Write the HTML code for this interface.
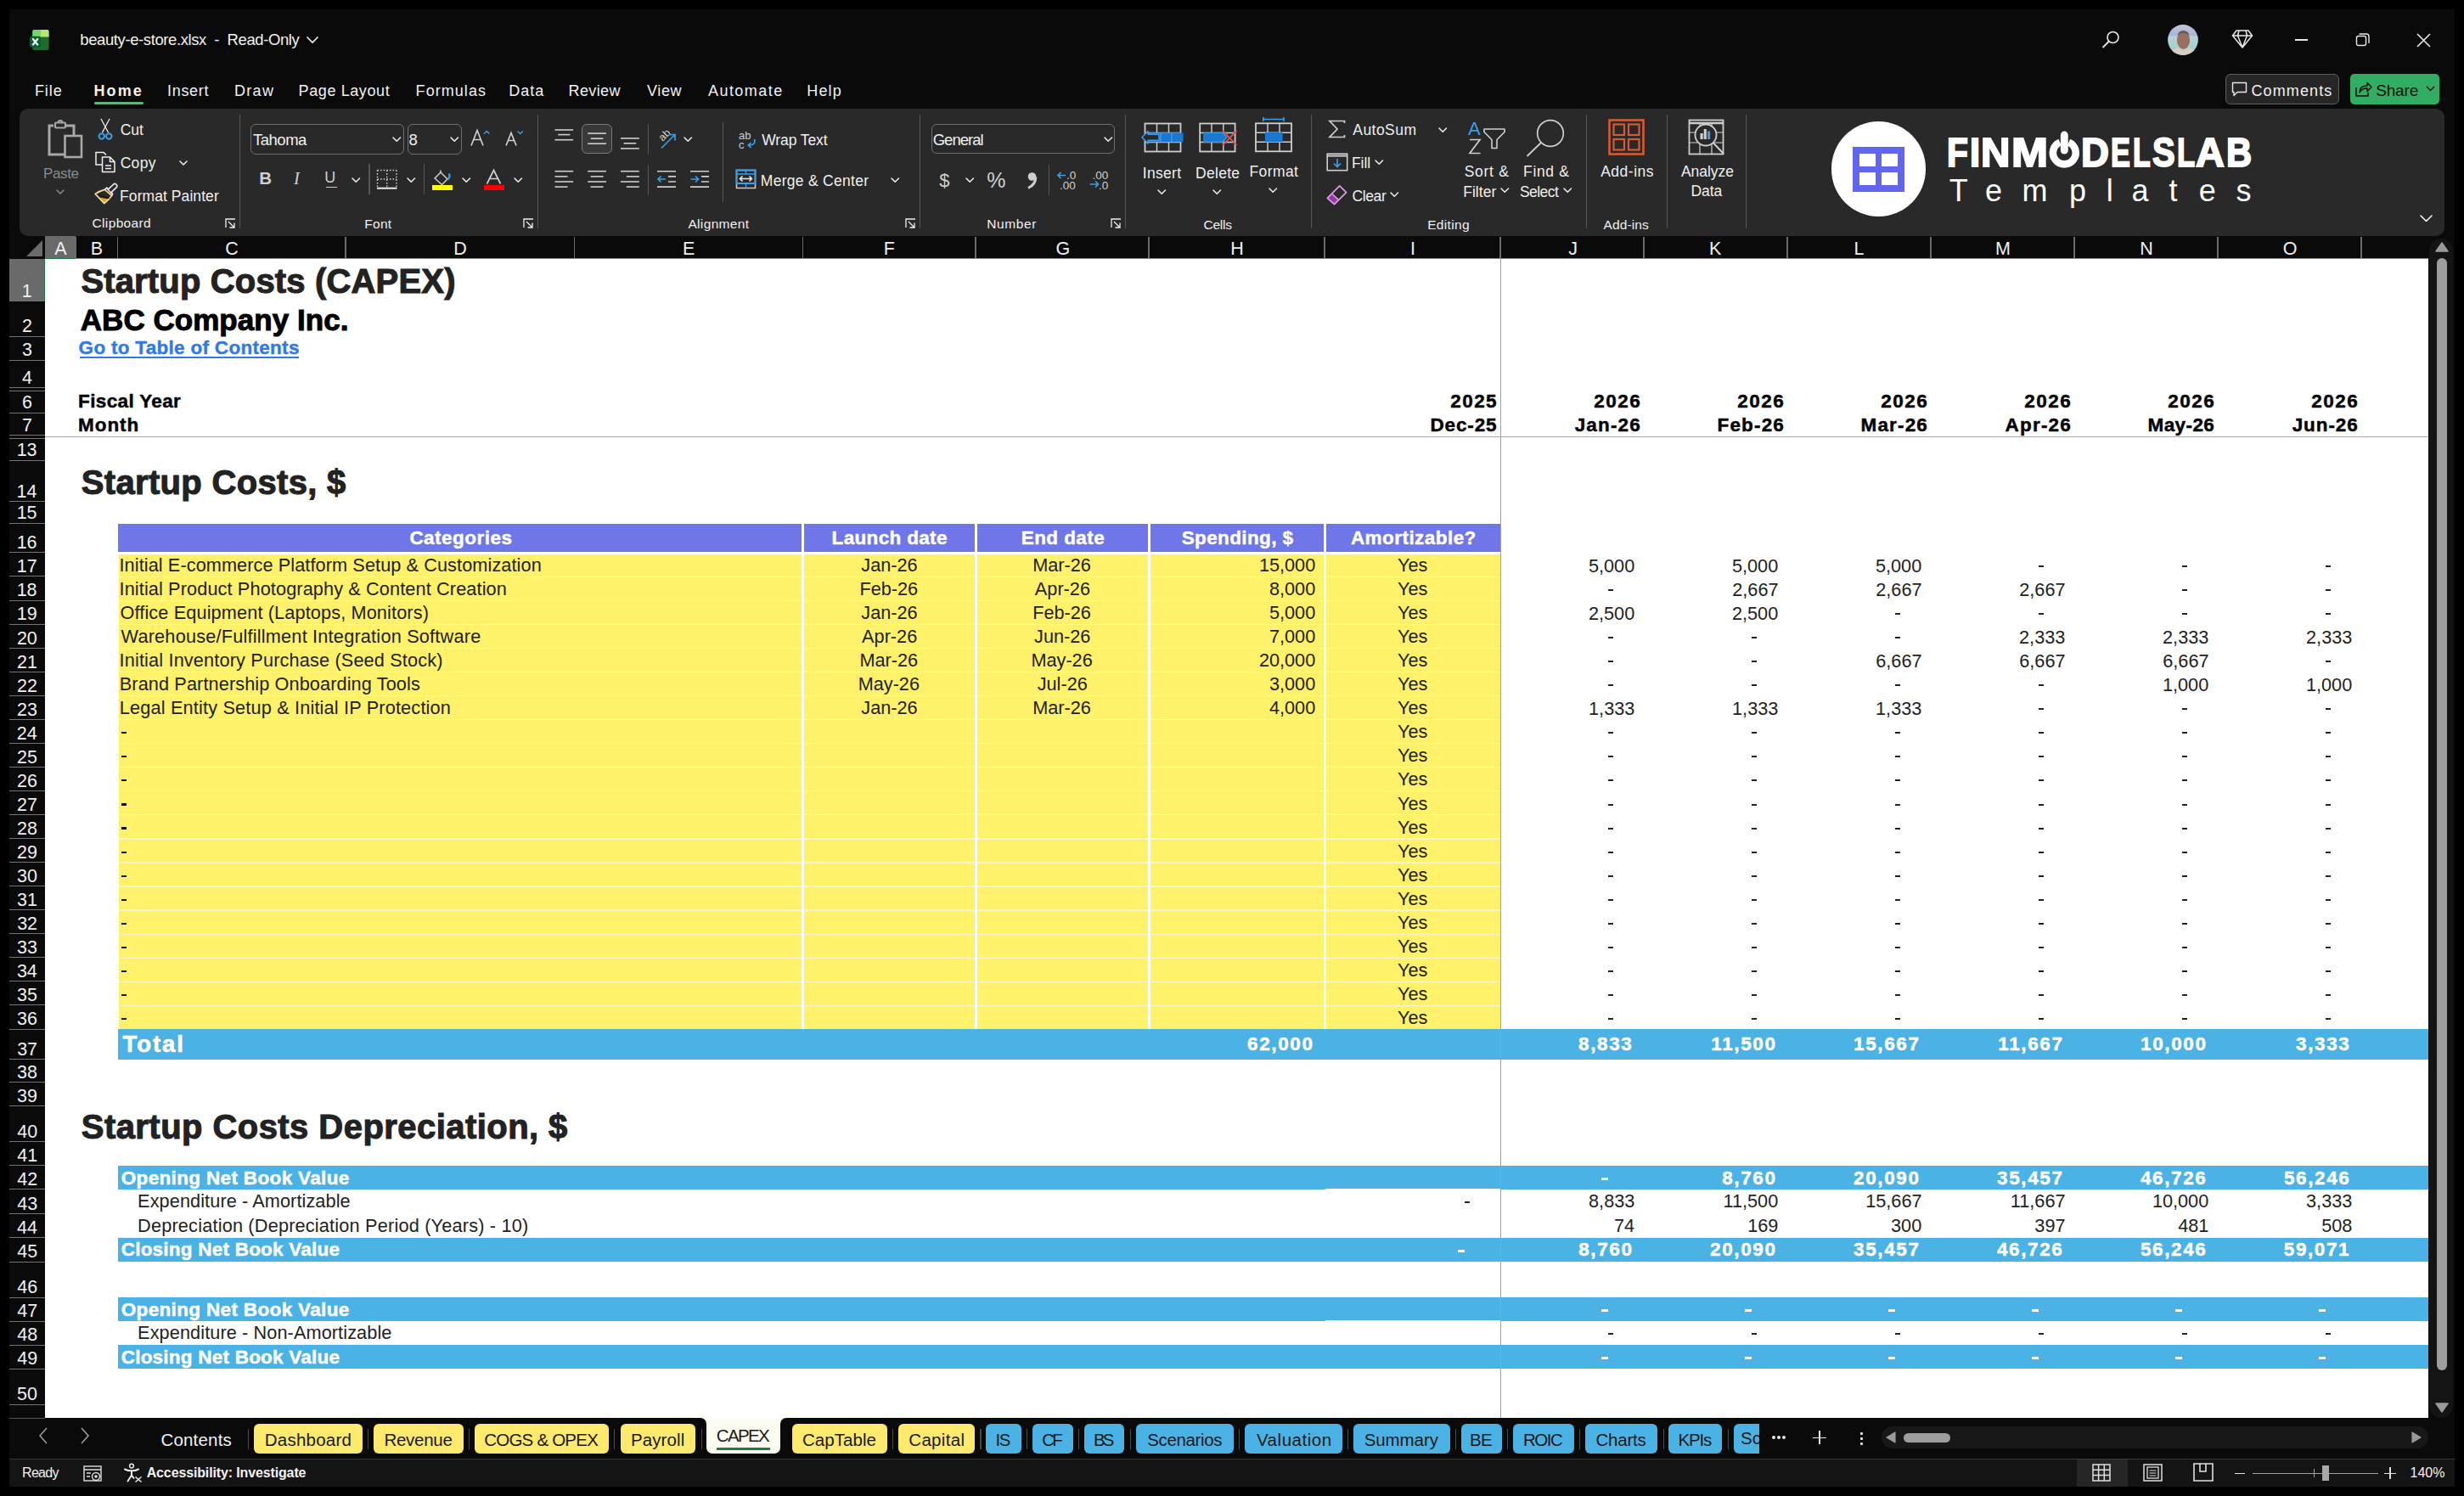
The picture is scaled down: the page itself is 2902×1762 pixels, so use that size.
<!DOCTYPE html>
<html><head><meta charset="utf-8"><style>
html,body{margin:0;padding:0;background:#000;}
body{width:2902px;height:1762px;position:relative;overflow:hidden;font-family:"Liberation Sans",sans-serif;}
</style></head><body>
<div style="position:absolute;left:11px;top:11px;width:2880px;height:1740px;background:#0a0a0a;"></div>
<svg style="position:absolute;left:34px;top:34px;" width="25" height="26" viewBox="0 0 25 26"><rect x="4.2" y="0.9" width="19.4" height="24" rx="2" fill="#1f6b2b"/><path d="M6.2 0.9 H13.3 V9.4 H4.2 V2.9 a2 2 0 0 1 2-2 Z" fill="#6fd56c"/><path d="M13.3 0.9 H21.6 a2 2 0 0 1 2 2 V9.4 H13.3 Z" fill="#b5e67a"/><rect x="1" y="8.7" width="12.7" height="13" rx="2" fill="#0d5a34"/><path d="M4.3 11.3 L10.8 19.2 M10.8 11.3 L4.3 19.2" stroke="#f2fff4" stroke-width="2.2"/></svg>
<div style="position:absolute;left:94.30px;top:38.48px;font-family:'Liberation Sans', sans-serif;font-size:18.5px;line-height:1;font-weight:normal;color:#f2f2f2;white-space:pre;letter-spacing:-0.406px;">beauty-e-store.xlsx  -  Read-Only</div>
<svg style="position:absolute;left:360px;top:42px;" width="16" height="10" viewBox="0 0 16 10"><path d="M1.5 1.5 L8 8 L14.5 1.5" stroke="#f0f0f0" stroke-width="1.6" fill="none"/></svg>
<svg style="position:absolute;left:2474px;top:35px;" width="24" height="24" viewBox="0 0 24 24"><circle cx="14.5" cy="9" r="6.5" stroke="#e8e8e8" stroke-width="1.6" fill="none"/><path d="M10 13.5 L2.5 21" stroke="#e8e8e8" stroke-width="1.8"/></svg>
<svg style="position:absolute;left:2553px;top:29px;" width="36" height="36" viewBox="0 0 36 36"><defs><clipPath id="av"><circle cx="18" cy="18" r="17.9"/></clipPath><linearGradient id="avg" x1="0" y1="0" x2="0" y2="1"><stop offset="0" stop-color="#c4c8e0"/><stop offset="0.33" stop-color="#aab4d4"/><stop offset="0.4" stop-color="#b4d4d8"/><stop offset="0.8" stop-color="#a6d0cc"/><stop offset="1" stop-color="#c8d0c8"/></linearGradient></defs><g clip-path="url(#av)"><rect width="36" height="36" fill="url(#avg)"/><ellipse cx="18.5" cy="18.5" rx="7.6" ry="10.4" fill="#977062"/><path d="M11.5 14 Q12 7 18.5 7 Q25 7 25.5 14 Q24 10 18.5 10 Q13 10 11.5 14 Z" fill="#6a5a58"/><path d="M1 36 Q5 29 13 27.5 L18.5 31 L24 27.5 Q32 29 36 36 Z" fill="#d9cdc2"/></g></svg>
<svg style="position:absolute;left:2628px;top:34px;" width="26" height="24" viewBox="0 0 26 24"><path d="M6 2 H20 L24.5 8 L13 22 L1.5 8 Z M1.5 8 H24.5 M9 2 L7.5 8 L13 22 L18.5 8 L17 2" stroke="#e8e8e8" stroke-width="1.5" fill="none" stroke-linejoin="round"/></svg>
<div style="position:absolute;left:2703px;top:46px;width:15px;height:1.5px;background:#e8e8e8;"></div>
<svg style="position:absolute;left:2774px;top:38px;" width="18" height="18" viewBox="0 0 18 18"><rect x="1.5" y="4.5" width="11" height="11" rx="2" stroke="#e8e8e8" stroke-width="1.4" fill="none"/><path d="M4.5 2 H13 a3 3 0 0 1 3 3 V13" stroke="#e8e8e8" stroke-width="1.4" fill="none"/></svg>
<svg style="position:absolute;left:2846px;top:39px;" width="17" height="17" viewBox="0 0 17 17"><path d="M1 1 L16 16 M16 1 L1 16" stroke="#e8e8e8" stroke-width="1.6"/></svg>
<div style="position:absolute;left:2621px;top:87px;width:132px;height:34px;border:1.3px solid #5e5e5e;border-radius:6px;background:#262626"></div>
<svg style="position:absolute;left:2628px;top:96px;" width="19" height="19" viewBox="0 0 19 19"><path d="M1.5 1.5 H17.5 V12.5 H7 L3 16.5 V12.5 H1.5 Z" stroke="#e8e8e8" stroke-width="1.4" fill="none" stroke-linejoin="round"/></svg>
<div style="position:absolute;left:2651.40px;top:97.50px;font-family:'Liberation Sans', sans-serif;font-size:18.0px;line-height:1;font-weight:normal;color:#f2f2f2;white-space:pre;letter-spacing:1.126px;">Comments</div>
<div style="position:absolute;left:2768px;top:87px;width:105px;height:36px;border-radius:5px;background:#33ad63"></div>
<svg style="position:absolute;left:2773px;top:95px;" width="21" height="20" viewBox="0 0 21 20"><path d="M2 8 V18 H16 V14" stroke="#111" stroke-width="1.5" fill="none"/><path d="M6 14 C6 8 10 6 15 6 V2.5 L20 7.5 L15 12.5 V9 C11 9 8 10 6 14 Z" stroke="#111" stroke-width="1.4" fill="none" stroke-linejoin="round"/></svg>
<div style="position:absolute;left:2798.20px;top:96.85px;font-family:'Liberation Sans', sans-serif;font-size:19.0px;line-height:1;font-weight:normal;color:#111;white-space:pre;letter-spacing:-0.158px;">Share</div>
<svg style="position:absolute;left:2857px;top:101px;" width="11" height="7" viewBox="0 0 11 7"><path d="M1 1 L5.5 5.5 L10 1" stroke="#111" stroke-width="1.5" fill="none"/></svg>
<div style="position:absolute;left:40.90px;top:98.00px;font-family:'Liberation Sans', sans-serif;font-size:18px;line-height:1;font-weight:normal;color:#f2f2f2;white-space:pre;letter-spacing:0.936px;">File</div>
<div style="position:absolute;left:110.40px;top:98.00px;font-family:'Liberation Sans', sans-serif;font-size:18px;line-height:1;font-weight:bold;color:#f2f2f2;white-space:pre;letter-spacing:2.134px;">Home</div>
<div style="position:absolute;left:197.00px;top:98.00px;font-family:'Liberation Sans', sans-serif;font-size:18px;line-height:1;font-weight:normal;color:#f2f2f2;white-space:pre;letter-spacing:0.697px;">Insert</div>
<div style="position:absolute;left:276.10px;top:98.00px;font-family:'Liberation Sans', sans-serif;font-size:18px;line-height:1;font-weight:normal;color:#f2f2f2;white-space:pre;letter-spacing:1.265px;">Draw</div>
<div style="position:absolute;left:351.60px;top:98.00px;font-family:'Liberation Sans', sans-serif;font-size:18px;line-height:1;font-weight:normal;color:#f2f2f2;white-space:pre;letter-spacing:0.602px;">Page Layout</div>
<div style="position:absolute;left:489.60px;top:98.00px;font-family:'Liberation Sans', sans-serif;font-size:18px;line-height:1;font-weight:normal;color:#f2f2f2;white-space:pre;letter-spacing:1.055px;">Formulas</div>
<div style="position:absolute;left:599.20px;top:98.00px;font-family:'Liberation Sans', sans-serif;font-size:18px;line-height:1;font-weight:normal;color:#f2f2f2;white-space:pre;letter-spacing:1.030px;">Data</div>
<div style="position:absolute;left:669.50px;top:98.00px;font-family:'Liberation Sans', sans-serif;font-size:18px;line-height:1;font-weight:normal;color:#f2f2f2;white-space:pre;letter-spacing:0.376px;">Review</div>
<div style="position:absolute;left:762.00px;top:98.00px;font-family:'Liberation Sans', sans-serif;font-size:18px;line-height:1;font-weight:normal;color:#f2f2f2;white-space:pre;letter-spacing:0.637px;">View</div>
<div style="position:absolute;left:834.00px;top:98.00px;font-family:'Liberation Sans', sans-serif;font-size:18px;line-height:1;font-weight:normal;color:#f2f2f2;white-space:pre;letter-spacing:1.452px;">Automate</div>
<div style="position:absolute;left:950.30px;top:98.00px;font-family:'Liberation Sans', sans-serif;font-size:18px;line-height:1;font-weight:normal;color:#f2f2f2;white-space:pre;letter-spacing:1.130px;">Help</div>
<div style="position:absolute;left:111px;top:119.5px;width:58px;height:3.5px;border-radius:2px;background:#5cb67c"></div>
<div style="position:absolute;left:23px;top:128px;width:2856px;height:150px;border-radius:10px;background:#292929"></div>
<svg style="position:absolute;left:54px;top:140px;overflow:visible;" width="44" height="47" viewBox="0 0 44 47"><path d="M9 8 H4 V42 H22" stroke="#a8a8a8" stroke-width="3" fill="none"/><path d="M24 8 H33 V19" stroke="#a8a8a8" stroke-width="3" fill="none"/><rect x="11" y="4.5" width="12" height="6" rx="1" stroke="#a8a8a8" stroke-width="2.2" fill="none"/><path d="M14.5 4.5 a2.5 2.5 0 0 1 5 0" stroke="#a8a8a8" stroke-width="2" fill="none"/><rect x="22.5" y="20" width="19.5" height="25" stroke="#a8a8a8" stroke-width="2.6" fill="none"/></svg>
<div style="position:absolute;left:51.10px;top:196.25px;font-family:'Liberation Sans', sans-serif;font-size:17px;line-height:1;font-weight:normal;color:#8c8c8c;white-space:pre;letter-spacing:-0.404px;">Paste</div>
<svg style="position:absolute;left:66.0px;top:223.0px;overflow:visible;" width="10" height="6.0" viewBox="0 0 10 6.0"><path d="M1 1 L5.0 5.0 L9 1" stroke="#8c8c8c" stroke-width="1.5" fill="none" stroke-linecap="round" stroke-linejoin="round"/></svg>
<svg style="position:absolute;left:114px;top:139px;overflow:visible;" width="20" height="26" viewBox="0 0 20 26"><path d="M5 1 L13.5 17 M15 1 L6.5 17" stroke="#f0f0f0" stroke-width="1.3" fill="none"/><circle cx="5.8" cy="21.5" r="3.2" stroke="#3b9fe8" stroke-width="2" fill="none"/><circle cx="14.3" cy="21.5" r="3.2" stroke="#3b9fe8" stroke-width="2" fill="none"/></svg>
<div style="position:absolute;left:141.70px;top:145.03px;font-family:'Liberation Sans', sans-serif;font-size:17.5px;line-height:1;font-weight:normal;color:#f0f0f0;white-space:pre;letter-spacing:0.015px;">Cut</div>
<svg style="position:absolute;left:111px;top:178px;overflow:visible;" width="26" height="26" viewBox="0 0 26 26"><path d="M9 16 H2 V1.5 H11 L14 4.5" stroke="#f0f0f0" stroke-width="1.5" fill="none"/><path d="M9.5 7 H18.5 L24 12.5 V24.5 H9.5 Z M18.5 7 V12.5 H24" stroke="#f0f0f0" stroke-width="1.5" fill="none" stroke-linejoin="round"/><path d="M13 17 H20 M13 20.5 H20" stroke="#f0f0f0" stroke-width="1.3"/></svg>
<div style="position:absolute;left:141.70px;top:183.82px;font-family:'Liberation Sans', sans-serif;font-size:17.5px;line-height:1;font-weight:normal;color:#f0f0f0;white-space:pre;letter-spacing:0.299px;">Copy</div>
<svg style="position:absolute;left:210.5px;top:188.5px;overflow:visible;" width="10" height="6.0" viewBox="0 0 10 6.0"><path d="M1 1 L5.0 5.0 L9 1" stroke="#f0f0f0" stroke-width="1.5" fill="none" stroke-linecap="round" stroke-linejoin="round"/></svg>
<svg style="position:absolute;left:108px;top:214px;overflow:visible;" width="32" height="30" viewBox="0 0 32 30"><path d="M9.5 18.8 L20.5 20.5 L14.8 25.3 Z" fill="#e9a126"/><path d="M4.2 14.4 Q9.5 10.8 15.3 9.4 L23.6 16.4 Q19.8 21.6 14.8 25.6 Z" stroke="#f6de98" stroke-width="1.7" fill="none" stroke-linejoin="round"/><path d="M7.5 15.6 L20.5 19.5" stroke="#151515" stroke-width="1.3"/><path d="M15.3 9.4 L17.8 7.2 L19.6 8.9 L25.8 3 Q27.2 1.8 28.6 3 L29.4 3.8 Q30.6 5.2 29.2 6.6 L23 12.6 L24.6 14.2 L23.6 16.4" stroke="#e6e6e6" stroke-width="1.7" fill="none" stroke-linejoin="round"/><path d="M17.6 7.6 L23.6 14.2" stroke="#e6e6e6" stroke-width="1.5"/></svg>
<div style="position:absolute;left:141.10px;top:223.12px;font-family:'Liberation Sans', sans-serif;font-size:17.5px;line-height:1;font-weight:normal;color:#f0f0f0;white-space:pre;letter-spacing:0.069px;">Format Painter</div>
<div style="position:absolute;left:108.50px;top:255.43px;font-family:'Liberation Sans', sans-serif;font-size:15.5px;line-height:1;font-weight:normal;color:#f0f0f0;white-space:pre;letter-spacing:0.360px;">Clipboard</div>
<svg style="position:absolute;left:265px;top:257px;overflow:visible;" width="13" height="12" viewBox="0 0 13 12"><path d="M1 11 V1 H12" stroke="#f0f0f0" stroke-width="1.3" fill="none"/><path d="M4 4 L11 11 M11 5.5 V11 H5.5" stroke="#f0f0f0" stroke-width="1.3" fill="none"/></svg>
<div style="position:absolute;left:281.9px;top:135px;width:1.2px;height:134px;background:#565656;"></div>
<div style="position:absolute;left:295px;top:146px;width:179px;height:33.5px;border:1.3px solid #707070;border-radius:6px"></div>
<div style="position:absolute;left:297.90px;top:156.28px;font-family:'Liberation Sans', sans-serif;font-size:18.5px;line-height:1;font-weight:normal;color:#f0f0f0;white-space:pre;letter-spacing:-0.465px;">Tahoma</div>
<svg style="position:absolute;left:462.05px;top:161.375px;overflow:visible;" width="10.5" height="6.25" viewBox="0 0 10.5 6.25"><path d="M1 1 L5.25 5.25 L9.5 1" stroke="#f0f0f0" stroke-width="1.5" fill="none" stroke-linecap="round" stroke-linejoin="round"/></svg>
<div style="position:absolute;left:479.5px;top:146px;width:62px;height:33.5px;border:1.3px solid #707070;border-radius:6px"></div>
<div style="position:absolute;left:481.60px;top:156.28px;font-family:'Liberation Sans', sans-serif;font-size:18.5px;line-height:1;font-weight:normal;color:#f0f0f0;white-space:pre;">8</div>
<svg style="position:absolute;left:529.75px;top:161.375px;overflow:visible;" width="10.5" height="6.25" viewBox="0 0 10.5 6.25"><path d="M1 1 L5.25 5.25 L9.5 1" stroke="#f0f0f0" stroke-width="1.5" fill="none" stroke-linecap="round" stroke-linejoin="round"/></svg>
<svg style="position:absolute;left:553px;top:152px;overflow:visible;" width="26" height="22" viewBox="0 0 26 22"><path d="M2 19.5 L9 1.5 L16 19.5 M4.8 12.5 H13.2" stroke="#cfcfcf" stroke-width="1.7" fill="none"/><path d="M17 5.5 L20.2 2.5 L23.4 5.5" stroke="#3b9fe8" stroke-width="1.6" fill="none"/></svg>
<svg style="position:absolute;left:594px;top:152px;overflow:visible;" width="24" height="22" viewBox="0 0 24 22"><path d="M2 19.5 L8 4.5 L14 19.5 M4.5 13.5 H11.5" stroke="#cfcfcf" stroke-width="1.7" fill="none"/><path d="M15.5 2.5 L18.7 5.5 L21.9 2.5" stroke="#3b9fe8" stroke-width="1.6" fill="none"/></svg>
<div style="position:absolute;left:305.20px;top:200.17px;font-family:'Liberation Sans', sans-serif;font-size:20.5px;line-height:1;font-weight:bold;color:#cfcfcf;white-space:pre;">B</div>
<div style="position:absolute;left:346.10px;top:200.17px;font-family:'Liberation Serif', serif;font-size:20.5px;line-height:1;font-weight:normal;color:#cfcfcf;white-space:pre;font-style:italic;">I</div>
<div style="position:absolute;left:382.20px;top:199.70px;font-family:'Liberation Sans', sans-serif;font-size:18px;line-height:1;font-weight:normal;color:#cfcfcf;white-space:pre;">U</div>
<div style="position:absolute;left:384px;top:219.5px;width:13px;height:1.6px;background:#cfcfcf;"></div>
<svg style="position:absolute;left:414.05px;top:209.175px;overflow:visible;" width="10.5" height="6.25" viewBox="0 0 10.5 6.25"><path d="M1 1 L5.25 5.25 L9.5 1" stroke="#f0f0f0" stroke-width="1.5" fill="none" stroke-linecap="round" stroke-linejoin="round"/></svg>
<div style="position:absolute;left:434.4px;top:193.4px;width:1.2px;height:36.0px;background:#565656;"></div>
<svg style="position:absolute;left:443px;top:199px;overflow:visible;" width="26" height="26" viewBox="0 0 26 26"><path d="M1.5 1.5 H24 M1.5 12 H24 M1.5 1.5 V22 M12.7 1.5 V22 M24 1.5 V22" stroke="#cfcfcf" stroke-width="1.4" stroke-dasharray="1.6 2" fill="none"/><path d="M1 22.7 H24.5" stroke="#f0f0f0" stroke-width="2"/></svg>
<svg style="position:absolute;left:478.95px;top:209.175px;overflow:visible;" width="10.5" height="6.25" viewBox="0 0 10.5 6.25"><path d="M1 1 L5.25 5.25 L9.5 1" stroke="#f0f0f0" stroke-width="1.5" fill="none" stroke-linecap="round" stroke-linejoin="round"/></svg>
<div style="position:absolute;left:499.09999999999997px;top:193.4px;width:1.2px;height:36.0px;background:#565656;"></div>
<svg style="position:absolute;left:508px;top:199px;overflow:visible;" width="26" height="26" viewBox="0 0 26 26"><path d="M4 11 L11 4 L19 12 L12.5 18.5 Z" stroke="#cfcfcf" stroke-width="1.5" fill="none" stroke-linejoin="round"/><path d="M11 4 V1.5" stroke="#cfcfcf" stroke-width="1.5"/><path d="M19.5 12.5 Q23 8 20.5 5.5" stroke="#3b9fe8" stroke-width="2.3" fill="none"/></svg>
<div style="position:absolute;left:509px;top:218px;width:24px;height:6px;background:#ffff00;"></div>
<svg style="position:absolute;left:543.75px;top:209.175px;overflow:visible;" width="10.5" height="6.25" viewBox="0 0 10.5 6.25"><path d="M1 1 L5.25 5.25 L9.5 1" stroke="#f0f0f0" stroke-width="1.5" fill="none" stroke-linecap="round" stroke-linejoin="round"/></svg>
<svg style="position:absolute;left:572px;top:199px;overflow:visible;" width="20" height="19" viewBox="0 0 20 19"><path d="M1.5 17.5 L9.5 1.5 L17.5 17.5 M4.5 11.5 H14.5" stroke="#cfcfcf" stroke-width="1.7" fill="none"/></svg>
<div style="position:absolute;left:569.6px;top:218px;width:24.4px;height:6px;background:#ff0000;"></div>
<svg style="position:absolute;left:605.05px;top:209.175px;overflow:visible;" width="10.5" height="6.25" viewBox="0 0 10.5 6.25"><path d="M1 1 L5.25 5.25 L9.5 1" stroke="#f0f0f0" stroke-width="1.5" fill="none" stroke-linecap="round" stroke-linejoin="round"/></svg>
<div style="position:absolute;left:429.30px;top:255.82px;font-family:'Liberation Sans', sans-serif;font-size:15.5px;line-height:1;font-weight:normal;color:#f0f0f0;white-space:pre;letter-spacing:0.264px;">Font</div>
<svg style="position:absolute;left:616px;top:257px;overflow:visible;" width="13" height="12" viewBox="0 0 13 12"><path d="M1 11 V1 H12" stroke="#f0f0f0" stroke-width="1.3" fill="none"/><path d="M4 4 L11 11 M11 5.5 V11 H5.5" stroke="#f0f0f0" stroke-width="1.3" fill="none"/></svg>
<div style="position:absolute;left:633.1px;top:135px;width:1.2px;height:134px;background:#565656;"></div>
<svg style="position:absolute;left:0px;top:0px;overflow:visible;" width="1" height="1" viewBox="0 0 1 1"></svg>
<svg style="position:absolute;left:653px;top:150px;overflow:visible;" width="24" height="18" viewBox="0 0 24 18"><path d="M0.5 3 H22.1" stroke="#cfcfcf" stroke-width="1.6"/><path d="M4.200000000000001 8.6 H18.4" stroke="#cfcfcf" stroke-width="1.6"/><path d="M0.5 14.7 H22.1" stroke="#cfcfcf" stroke-width="1.6"/></svg>
<div style="position:absolute;left:685.2px;top:146.3px;width:33.5px;height:33.2px;border:1.3px solid #7a7a7a;border-radius:6px;background:#393939"></div>
<svg style="position:absolute;left:692px;top:154px;overflow:visible;" width="24" height="18" viewBox="0 0 24 18"><path d="M0.2 3.1 H22.0" stroke="#cfcfcf" stroke-width="1.6"/><path d="M3.750000000000001 9.2 H18.45" stroke="#cfcfcf" stroke-width="1.6"/><path d="M0.2 15.2 H22.0" stroke="#cfcfcf" stroke-width="1.6"/></svg>
<svg style="position:absolute;left:731px;top:160px;overflow:visible;" width="24" height="18" viewBox="0 0 24 18"><path d="M0 2.9 H21.8" stroke="#cfcfcf" stroke-width="1.6"/><path d="M3.5500000000000007 8.8 H18.25" stroke="#cfcfcf" stroke-width="1.6"/><path d="M0 14.9 H21.8" stroke="#cfcfcf" stroke-width="1.6"/></svg>
<div style="position:absolute;left:762.6999999999999px;top:146.3px;width:1.2px;height:35.39999999999998px;background:#565656;"></div>
<svg style="position:absolute;left:771px;top:150px;overflow:visible;" width="28" height="27" viewBox="0 0 28 27"><text x="0" y="0" transform="translate(9.5 17) rotate(-45)" font-family="Liberation Sans" font-size="12.5" fill="#cfcfcf">ab</text><path d="M8 24.5 L24 8.5 M17 8.5 H24 V15.5" stroke="#3b9fe8" stroke-width="1.7" fill="none"/></svg>
<svg style="position:absolute;left:804.95px;top:161.475px;overflow:visible;" width="10.5" height="6.25" viewBox="0 0 10.5 6.25"><path d="M1 1 L5.25 5.25 L9.5 1" stroke="#f0f0f0" stroke-width="1.5" fill="none" stroke-linecap="round" stroke-linejoin="round"/></svg>
<div style="position:absolute;left:850.8px;top:143.9px;width:1.2px;height:94.1px;background:#565656;"></div>
<svg style="position:absolute;left:869px;top:152px;overflow:visible;" width="24" height="25" viewBox="0 0 24 25"><text x="1" y="11.5" font-family="Liberation Sans" font-size="13" fill="#cfcfcf">ab</text><text x="1" y="22.5" font-family="Liberation Sans" font-size="13" fill="#cfcfcf">c</text><path d="M19.5 12 Q21.5 19 12.5 19 M15.5 16 L12.3 19 L15.5 22" stroke="#3b9fe8" stroke-width="1.7" fill="none"/></svg>
<div style="position:absolute;left:897.20px;top:157.12px;font-family:'Liberation Sans', sans-serif;font-size:17.5px;line-height:1;font-weight:normal;color:#f0f0f0;white-space:pre;letter-spacing:-0.099px;">Wrap Text</div>
<svg style="position:absolute;left:653px;top:199px;overflow:visible;" width="24" height="24" viewBox="0 0 24 24"><path d="M0.5 2.7 H22.1" stroke="#cfcfcf" stroke-width="1.6"/><path d="M0.5 8.9 H15.5" stroke="#cfcfcf" stroke-width="1.6"/><path d="M0.5 15 H22.1" stroke="#cfcfcf" stroke-width="1.6"/><path d="M0.5 21.1 H15.5" stroke="#cfcfcf" stroke-width="1.6"/></svg>
<svg style="position:absolute;left:692px;top:199px;overflow:visible;" width="24" height="24" viewBox="0 0 24 24"><path d="M0.2 2.7 H22.0" stroke="#cfcfcf" stroke-width="1.6"/><path d="M3.6000000000000005 8.9 H18.6" stroke="#cfcfcf" stroke-width="1.6"/><path d="M0.2 15 H22.0" stroke="#cfcfcf" stroke-width="1.6"/><path d="M3.6000000000000005 21.1 H18.6" stroke="#cfcfcf" stroke-width="1.6"/></svg>
<svg style="position:absolute;left:731px;top:199px;overflow:visible;" width="24" height="24" viewBox="0 0 24 24"><path d="M0 2.7 H21.8" stroke="#cfcfcf" stroke-width="1.6"/><path d="M6.800000000000001 8.9 H21.8" stroke="#cfcfcf" stroke-width="1.6"/><path d="M0 15 H21.8" stroke="#cfcfcf" stroke-width="1.6"/><path d="M6.800000000000001 21.1 H21.8" stroke="#cfcfcf" stroke-width="1.6"/></svg>
<div style="position:absolute;left:762.6999999999999px;top:193.7px;width:1.2px;height:36.0px;background:#565656;"></div>
<svg style="position:absolute;left:773px;top:199px;overflow:visible;" width="24" height="24" viewBox="0 0 24 24"><path d="M1 2.7 H23 M14 8.9 H23 M14 15 H23 M1 21.1 H23" stroke="#cfcfcf" stroke-width="1.6"/><path d="M11 12 H2 M5.5 8.5 L2 12 L5.5 15.5" stroke="#3b9fe8" stroke-width="1.7" fill="none"/></svg>
<svg style="position:absolute;left:812px;top:199px;overflow:visible;" width="24" height="24" viewBox="0 0 24 24"><path d="M1 2.7 H23 M14 8.9 H23 M14 15 H23 M1 21.1 H23" stroke="#cfcfcf" stroke-width="1.6"/><path d="M1.5 12 H10.5 M7 8.5 L10.5 12 L7 15.5" stroke="#3b9fe8" stroke-width="1.7" fill="none"/></svg>
<svg style="position:absolute;left:866px;top:199px;overflow:visible;" width="26" height="25" viewBox="0 0 26 25"><path d="M1.5 1.5 H23.5 V22.5 H1.5 Z" stroke="#d8c8b8" stroke-width="1.6" fill="none"/><path d="M1.5 1.5 H23.5 V17 H1.5 Z" stroke="#3b9fe8" stroke-width="1.8" fill="none"/><path d="M1.5 6 H23.5 M12.5 1.5 V6 M12.5 17 V22.5" stroke="#3b9fe8" stroke-width="1.4"/><path d="M5.5 11.5 H19.5 M8.5 8.5 L5.5 11.5 L8.5 14.5 M16.5 8.5 L19.5 11.5 L16.5 14.5" stroke="#f0f0f0" stroke-width="1.5" fill="none"/></svg>
<div style="position:absolute;left:895.80px;top:205.12px;font-family:'Liberation Sans', sans-serif;font-size:17.5px;line-height:1;font-weight:normal;color:#f0f0f0;white-space:pre;letter-spacing:0.285px;">Merge &amp; Center</div>
<svg style="position:absolute;left:1048.95px;top:209.275px;overflow:visible;" width="10.5" height="6.25" viewBox="0 0 10.5 6.25"><path d="M1 1 L5.25 5.25 L9.5 1" stroke="#f0f0f0" stroke-width="1.5" fill="none" stroke-linecap="round" stroke-linejoin="round"/></svg>
<div style="position:absolute;left:810.40px;top:255.93px;font-family:'Liberation Sans', sans-serif;font-size:15.5px;line-height:1;font-weight:normal;color:#f0f0f0;white-space:pre;letter-spacing:0.348px;">Alignment</div>
<svg style="position:absolute;left:1066px;top:257px;overflow:visible;" width="13" height="12" viewBox="0 0 13 12"><path d="M1 11 V1 H12" stroke="#f0f0f0" stroke-width="1.3" fill="none"/><path d="M4 4 L11 11 M11 5.5 V11 H5.5" stroke="#f0f0f0" stroke-width="1.3" fill="none"/></svg>
<div style="position:absolute;left:1082.8000000000002px;top:135px;width:1.2px;height:134px;background:#565656;"></div>
<div style="position:absolute;left:1096.6px;top:146.4px;width:214.5px;height:32.5px;border:1.3px solid #707070;border-radius:6px"></div>
<div style="position:absolute;left:1098.70px;top:155.97px;font-family:'Liberation Sans', sans-serif;font-size:18.5px;line-height:1;font-weight:normal;color:#f0f0f0;white-space:pre;letter-spacing:-0.984px;">General</div>
<svg style="position:absolute;left:1299.85px;top:161.475px;overflow:visible;" width="10.5" height="6.25" viewBox="0 0 10.5 6.25"><path d="M1 1 L5.25 5.25 L9.5 1" stroke="#f0f0f0" stroke-width="1.5" fill="none" stroke-linecap="round" stroke-linejoin="round"/></svg>
<div style="position:absolute;left:1106.30px;top:201.80px;font-family:'Liberation Sans', sans-serif;font-size:22px;line-height:1;font-weight:normal;color:#cfcfcf;white-space:pre;">$</div>
<svg style="position:absolute;left:1137.15px;top:209.375px;overflow:visible;" width="10.5" height="6.25" viewBox="0 0 10.5 6.25"><path d="M1 1 L5.25 5.25 L9.5 1" stroke="#f0f0f0" stroke-width="1.5" fill="none" stroke-linecap="round" stroke-linejoin="round"/></svg>
<div style="position:absolute;left:1162.20px;top:200.25px;font-family:'Liberation Sans', sans-serif;font-size:25px;line-height:1;font-weight:normal;color:#cfcfcf;white-space:pre;letter-spacing:-0.500px;">%</div>
<svg style="position:absolute;left:1208px;top:202px;overflow:visible;" width="14" height="21" viewBox="0 0 14 21"><circle cx="7.5" cy="6" r="4.8" fill="#cfcfcf"/><path d="M11.8 6.5 Q12 15 3 19.5" stroke="#cfcfcf" stroke-width="3" fill="none"/></svg>
<div style="position:absolute;left:1234.7px;top:194.4px;width:1.2px;height:35.5px;background:#565656;"></div>
<svg style="position:absolute;left:1244px;top:199px;overflow:visible;" width="26" height="25" viewBox="0 0 26 25"><path d="M2 7.5 H11 M5.5 4 L2 7.5 L5.5 11" stroke="#3b9fe8" stroke-width="1.7" fill="none"/><text x="12" y="11.5" font-family="Liberation Sans" font-size="13.5" fill="#cfcfcf">.0</text><text x="4" y="23.5" font-family="Liberation Sans" font-size="13.5" fill="#cfcfcf">.00</text></svg>
<svg style="position:absolute;left:1282px;top:199px;overflow:visible;" width="26" height="25" viewBox="0 0 26 25"><text x="4.5" y="11.5" font-family="Liberation Sans" font-size="13.5" fill="#cfcfcf">.00</text><path d="M1.5 18 H11.5 M8 14.5 L11.5 18 L8 21.5" stroke="#3b9fe8" stroke-width="1.7" fill="none"/><text x="12" y="23.5" font-family="Liberation Sans" font-size="13.5" fill="#cfcfcf">.0</text></svg>
<div style="position:absolute;left:1162.20px;top:255.93px;font-family:'Liberation Sans', sans-serif;font-size:15.5px;line-height:1;font-weight:normal;color:#f0f0f0;white-space:pre;letter-spacing:0.627px;">Number</div>
<svg style="position:absolute;left:1307.5px;top:257px;overflow:visible;" width="13" height="12" viewBox="0 0 13 12"><path d="M1 11 V1 H12" stroke="#f0f0f0" stroke-width="1.3" fill="none"/><path d="M4 4 L11 11 M11 5.5 V11 H5.5" stroke="#f0f0f0" stroke-width="1.3" fill="none"/></svg>
<div style="position:absolute;left:1324.8000000000002px;top:135px;width:1.2px;height:134px;background:#565656;"></div>
<svg style="position:absolute;left:1343px;top:144px;overflow:visible;" width="52" height="36" viewBox="0 0 52 36"><rect x="5.5" y="1.5" width="42" height="33" stroke="#cfcfcf" stroke-width="1.8" fill="none"/><path d="M19.5 1.5 V34.5 M5.5 12.5 H47.5" stroke="#cfcfcf" stroke-width="1.4400000000000002"/><path d="M33.5 1.5 V34.5 M5.5 23.5 H47.5" stroke="#cfcfcf" stroke-width="1.4400000000000002"/><rect x="10.5" y="12.3" width="40" height="11" fill="#1a78d0"/><path d="M24 12.3 V23.3 M37 12.3 V23.3" stroke="#3b9fe8" stroke-width="1.3"/><path d="M2 17.8 L9 10.5 V14.3 H22 V21.3 H9 V25 Z" stroke="#3b9fe8" stroke-width="1.5" fill="#292929" stroke-linejoin="round"/></svg>
<div style="position:absolute;left:1345.70px;top:196.43px;font-family:'Liberation Sans', sans-serif;font-size:17.5px;line-height:1;font-weight:normal;color:#f0f0f0;white-space:pre;letter-spacing:0.339px;">Insert</div>
<svg style="position:absolute;left:1362.95px;top:223.275px;overflow:visible;" width="10.5" height="6.25" viewBox="0 0 10.5 6.25"><path d="M1 1 L5.25 5.25 L9.5 1" stroke="#f0f0f0" stroke-width="1.5" fill="none" stroke-linecap="round" stroke-linejoin="round"/></svg>
<svg style="position:absolute;left:1411px;top:144px;overflow:visible;" width="50" height="36" viewBox="0 0 50 36"><rect x="2.2" y="1.5" width="41.4" height="33" stroke="#cfcfcf" stroke-width="1.8" fill="none"/><path d="M16.0 1.5 V34.5 M2.2 12.5 H43.6" stroke="#cfcfcf" stroke-width="1.4400000000000002"/><path d="M29.799999999999997 1.5 V34.5 M2.2 23.5 H43.6" stroke="#cfcfcf" stroke-width="1.4400000000000002"/><rect x="6" y="12.3" width="25" height="11" fill="#1a78d0"/><path d="M6 12.3 H29 L34 17.8 L29 23.3 H6" stroke="#3b9fe8" stroke-width="1.3" fill="#1a78d0"/><path d="M29 10 L45.5 27 M45.5 10 L29 27" stroke="#e05050" stroke-width="1.8"/></svg>
<div style="position:absolute;left:1408.00px;top:196.03px;font-family:'Liberation Sans', sans-serif;font-size:17.5px;line-height:1;font-weight:normal;color:#f0f0f0;white-space:pre;letter-spacing:0.289px;">Delete</div>
<svg style="position:absolute;left:1427.85px;top:223.275px;overflow:visible;" width="10.5" height="6.25" viewBox="0 0 10.5 6.25"><path d="M1 1 L5.25 5.25 L9.5 1" stroke="#f0f0f0" stroke-width="1.5" fill="none" stroke-linecap="round" stroke-linejoin="round"/></svg>
<svg style="position:absolute;left:1477px;top:137px;overflow:visible;" width="46" height="43" viewBox="0 0 46 43"><rect x="2" y="8.3" width="42" height="33" stroke="#cfcfcf" stroke-width="1.8" fill="none"/><path d="M16.0 8.3 V41.3 M2 19.3 H44" stroke="#cfcfcf" stroke-width="1.4400000000000002"/><path d="M30.0 8.3 V41.3 M2 30.3 H44" stroke="#cfcfcf" stroke-width="1.4400000000000002"/><rect x="13" y="19" width="20.6" height="11.3" fill="#1a78d0"/><path d="M10.8 3.5 H35 M10.8 1 V6 M35 1 V6" stroke="#3b9fe8" stroke-width="1.6"/></svg>
<div style="position:absolute;left:1471.50px;top:194.12px;font-family:'Liberation Sans', sans-serif;font-size:17.5px;line-height:1;font-weight:normal;color:#f0f0f0;white-space:pre;letter-spacing:0.408px;">Format</div>
<svg style="position:absolute;left:1494.15px;top:221.275px;overflow:visible;" width="10.5" height="6.25" viewBox="0 0 10.5 6.25"><path d="M1 1 L5.25 5.25 L9.5 1" stroke="#f0f0f0" stroke-width="1.5" fill="none" stroke-linecap="round" stroke-linejoin="round"/></svg>
<div style="position:absolute;left:1417.50px;top:256.82px;font-family:'Liberation Sans', sans-serif;font-size:15.5px;line-height:1;font-weight:normal;color:#f0f0f0;white-space:pre;letter-spacing:-0.225px;">Cells</div>
<div style="position:absolute;left:1543.8000000000002px;top:135px;width:1.2px;height:134px;background:#565656;"></div>
<svg style="position:absolute;left:1564px;top:141px;overflow:visible;" width="22" height="23" viewBox="0 0 22 23"><path d="M19.5 4 V1.5 H2 L11 11 L2 20.5 H19.5 V18" stroke="#cfcfcf" stroke-width="1.7" fill="none" stroke-linejoin="miter"/></svg>
<div style="position:absolute;left:1593.30px;top:145.12px;font-family:'Liberation Sans', sans-serif;font-size:17.5px;line-height:1;font-weight:normal;color:#f0f0f0;white-space:pre;letter-spacing:0.449px;">AutoSum</div>
<svg style="position:absolute;left:1694.15px;top:149.775px;overflow:visible;" width="10.5" height="6.25" viewBox="0 0 10.5 6.25"><path d="M1 1 L5.25 5.25 L9.5 1" stroke="#f0f0f0" stroke-width="1.5" fill="none" stroke-linecap="round" stroke-linejoin="round"/></svg>
<svg style="position:absolute;left:1562px;top:180px;overflow:visible;" width="26" height="23" viewBox="0 0 26 23"><rect x="1.2" y="1.2" width="23.5" height="19.5" stroke="#cfcfcf" stroke-width="1.6" fill="none"/><path d="M1.2 3.6 H24.7" stroke="#cfcfcf" stroke-width="2"/><path d="M13 7 V16 M9 12.5 L13 16.5 L17 12.5" stroke="#3b9fe8" stroke-width="1.7" fill="none"/></svg>
<div style="position:absolute;left:1591.90px;top:183.93px;font-family:'Liberation Sans', sans-serif;font-size:17.5px;line-height:1;font-weight:normal;color:#f0f0f0;white-space:pre;letter-spacing:-0.022px;">Fill</div>
<svg style="position:absolute;left:1619.35px;top:187.675px;overflow:visible;" width="10.5" height="6.25" viewBox="0 0 10.5 6.25"><path d="M1 1 L5.25 5.25 L9.5 1" stroke="#f0f0f0" stroke-width="1.5" fill="none" stroke-linecap="round" stroke-linejoin="round"/></svg>
<svg style="position:absolute;left:1558px;top:214px;overflow:visible;" width="32" height="32" viewBox="0 0 32 32"><path d="M5.3 19.3 L11.1 14.5 L18.2 21.2 L13.5 26.7 Z" fill="#9b35ab"/><path d="M19.7 4.9 L27.6 12.6 L13.5 26.7 L5.3 19.3 Z" stroke="#dc9ee2" stroke-width="1.7" fill="none" stroke-linejoin="round"/><path d="M11.1 14.5 L18.2 21.2" stroke="#dc9ee2" stroke-width="1.6"/></svg>
<div style="position:absolute;left:1592.50px;top:222.62px;font-family:'Liberation Sans', sans-serif;font-size:17.5px;line-height:1;font-weight:normal;color:#f0f0f0;white-space:pre;letter-spacing:-0.398px;">Clear</div>
<svg style="position:absolute;left:1637.25px;top:226.375px;overflow:visible;" width="10.5" height="6.25" viewBox="0 0 10.5 6.25"><path d="M1 1 L5.25 5.25 L9.5 1" stroke="#f0f0f0" stroke-width="1.5" fill="none" stroke-linecap="round" stroke-linejoin="round"/></svg>
<svg style="position:absolute;left:1728px;top:140px;overflow:visible;" width="46" height="43" viewBox="0 0 46 43"><text x="1" y="18.5" font-family="Liberation Sans" font-size="22" fill="#3b9fe8">A</text><path d="M3 24.5 H15 L3 40.5 H15.5" stroke="#cfcfcf" stroke-width="1.7" fill="none"/><path d="M20 12 H44 V15.5 L35 24.5 V34.5 H29 V24.5 L20 15.5 Z" stroke="#cfcfcf" stroke-width="1.6" fill="none" stroke-linejoin="round"/></svg>
<div style="position:absolute;left:1724.70px;top:194.03px;font-family:'Liberation Sans', sans-serif;font-size:17.5px;line-height:1;font-weight:normal;color:#f0f0f0;white-space:pre;letter-spacing:0.709px;">Sort &amp;</div>
<div style="position:absolute;left:1723.20px;top:217.62px;font-family:'Liberation Sans', sans-serif;font-size:17.5px;line-height:1;font-weight:normal;color:#f0f0f0;white-space:pre;letter-spacing:0.028px;">Filter</div>
<svg style="position:absolute;left:1767.05px;top:221.475px;overflow:visible;" width="10.5" height="6.25" viewBox="0 0 10.5 6.25"><path d="M1 1 L5.25 5.25 L9.5 1" stroke="#f0f0f0" stroke-width="1.5" fill="none" stroke-linecap="round" stroke-linejoin="round"/></svg>
<svg style="position:absolute;left:1796px;top:139px;overflow:visible;" width="48" height="47" viewBox="0 0 48 47"><circle cx="30" cy="18" r="15.3" stroke="#cfcfcf" stroke-width="1.7" fill="none"/><path d="M19 29 L2.5 45" stroke="#cfcfcf" stroke-width="1.8"/></svg>
<div style="position:absolute;left:1794.10px;top:194.03px;font-family:'Liberation Sans', sans-serif;font-size:17.5px;line-height:1;font-weight:normal;color:#f0f0f0;white-space:pre;letter-spacing:0.639px;">Find &amp;</div>
<div style="position:absolute;left:1789.90px;top:217.62px;font-family:'Liberation Sans', sans-serif;font-size:17.5px;line-height:1;font-weight:normal;color:#f0f0f0;white-space:pre;letter-spacing:-0.535px;">Select</div>
<svg style="position:absolute;left:1840.95px;top:221.475px;overflow:visible;" width="10.5" height="6.25" viewBox="0 0 10.5 6.25"><path d="M1 1 L5.25 5.25 L9.5 1" stroke="#f0f0f0" stroke-width="1.5" fill="none" stroke-linecap="round" stroke-linejoin="round"/></svg>
<div style="position:absolute;left:1681.20px;top:256.52px;font-family:'Liberation Sans', sans-serif;font-size:15.5px;line-height:1;font-weight:normal;color:#f0f0f0;white-space:pre;letter-spacing:0.338px;">Editing</div>
<div style="position:absolute;left:1868.1000000000001px;top:135px;width:1.2px;height:134px;background:#565656;"></div>
<svg style="position:absolute;left:1894px;top:140px;overflow:visible;" width="44" height="44" viewBox="0 0 44 44"><rect x="1.5" y="1.5" width="40" height="40" stroke="#d75a30" stroke-width="2.6" fill="none"/><rect x="6.5" y="6.5" width="12.5" height="12.5" stroke="#d75a30" stroke-width="2.2" fill="none"/><rect x="24" y="6.5" width="12.5" height="12.5" stroke="#d75a30" stroke-width="2.2" fill="none"/><rect x="6.5" y="24" width="12.5" height="12.5" stroke="#d75a30" stroke-width="2.2" fill="none"/><rect x="24" y="24" width="12.5" height="12.5" stroke="#d75a30" stroke-width="2.2" fill="none"/></svg>
<div style="position:absolute;left:1885.20px;top:194.03px;font-family:'Liberation Sans', sans-serif;font-size:17.5px;line-height:1;font-weight:normal;color:#f0f0f0;white-space:pre;letter-spacing:0.502px;">Add-ins</div>
<div style="position:absolute;left:1888.50px;top:256.52px;font-family:'Liberation Sans', sans-serif;font-size:15.5px;line-height:1;font-weight:normal;color:#f0f0f0;white-space:pre;letter-spacing:0.116px;">Add-ins</div>
<div style="position:absolute;left:1962.7px;top:135px;width:1.2px;height:134px;background:#565656;"></div>
<svg style="position:absolute;left:1988px;top:140px;overflow:visible;" width="46" height="45" viewBox="0 0 46 45"><rect x="1.5" y="1.5" width="40" height="40" stroke="#cfcfcf" stroke-width="1.8" fill="none"/><path d="M1.5 5 H41.5" stroke="#cfcfcf" stroke-width="2.5"/><path d="M1.5 16 H41.5 M1.5 28 H41.5 M14 5 V41.5 M28 5 V41.5" stroke="#cfcfcf" stroke-width="1.2"/><circle cx="21" cy="19" r="12.5" stroke="#cfcfcf" stroke-width="1.8" fill="#292929"/><path d="M29.5 28 L42 41" stroke="#cfcfcf" stroke-width="2"/><rect x="14.5" y="17" width="3.2" height="7" fill="#cfcfcf"/><rect x="18.7" y="12" width="3.2" height="12" fill="#cfcfcf"/><rect x="23" y="14.5" width="3.2" height="9.5" fill="#3b9fe8"/></svg>
<div style="position:absolute;left:1979.90px;top:194.03px;font-family:'Liberation Sans', sans-serif;font-size:17.5px;line-height:1;font-weight:normal;color:#f0f0f0;white-space:pre;letter-spacing:-0.038px;">Analyze</div>
<div style="position:absolute;left:1991.40px;top:217.22px;font-family:'Liberation Sans', sans-serif;font-size:17.5px;line-height:1;font-weight:normal;color:#f0f0f0;white-space:pre;letter-spacing:-0.044px;">Data</div>
<div style="position:absolute;left:2055.6px;top:135px;width:1.2px;height:134px;background:#565656;"></div>
<div style="position:absolute;left:2156.6px;top:143px;width:111.6px;height:111.6px;border-radius:50%;background:#fff"></div>
<div style="position:absolute;left:2182px;top:173.4px;width:61px;height:52.3px;background:#6266ee;"></div>
<div style="position:absolute;left:2190px;top:181.3px;width:18.8px;height:14.6px;background:#ffffff;"></div>
<div style="position:absolute;left:2216.4px;top:181.3px;width:18.8px;height:14.6px;background:#ffffff;"></div>
<div style="position:absolute;left:2190px;top:203.2px;width:18.8px;height:14.6px;background:#ffffff;"></div>
<div style="position:absolute;left:2216.4px;top:203.2px;width:18.8px;height:14.6px;background:#ffffff;"></div>
<div style="position:absolute;left:2293.48px;top:155.15px;font-family:'Liberation Sans',sans-serif;font-weight:bold;font-size:49px;line-height:1;color:#fff;-webkit-text-stroke:2.0px #fff;transform:scaleX(0.831);transform-origin:0 0;white-space:pre">F</div>
<div style="position:absolute;left:2319.57px;top:155.15px;font-family:'Liberation Sans',sans-serif;font-weight:bold;font-size:49px;line-height:1;color:#fff;-webkit-text-stroke:2.0px #fff;transform:scaleX(0.891);transform-origin:0 0;white-space:pre">I</div>
<div style="position:absolute;left:2332.92px;top:155.15px;font-family:'Liberation Sans',sans-serif;font-weight:bold;font-size:49px;line-height:1;color:#fff;-webkit-text-stroke:2.0px #fff;transform:scaleX(0.973);transform-origin:0 0;white-space:pre">N</div>
<div style="position:absolute;left:2369.07px;top:155.15px;font-family:'Liberation Sans',sans-serif;font-weight:bold;font-size:49px;line-height:1;color:#fff;-webkit-text-stroke:2.0px #fff;transform:scaleX(1.055);transform-origin:0 0;white-space:pre">M</div>
<div style="position:absolute;left:2451.40px;top:155.15px;font-family:'Liberation Sans',sans-serif;font-weight:bold;font-size:49px;line-height:1;color:#fff;-webkit-text-stroke:2.0px #fff;transform:scaleX(0.931);transform-origin:0 0;white-space:pre">D</div>
<div style="position:absolute;left:2486.42px;top:155.15px;font-family:'Liberation Sans',sans-serif;font-weight:bold;font-size:49px;line-height:1;color:#fff;-webkit-text-stroke:2.0px #fff;transform:scaleX(0.700);transform-origin:0 0;white-space:pre">E</div>
<div style="position:absolute;left:2511.94px;top:155.15px;font-family:'Liberation Sans',sans-serif;font-weight:bold;font-size:49px;line-height:1;color:#fff;-webkit-text-stroke:2.0px #fff;transform:scaleX(0.691);transform-origin:0 0;white-space:pre">L</div>
<div style="position:absolute;left:2534.85px;top:155.15px;font-family:'Liberation Sans',sans-serif;font-weight:bold;font-size:49px;line-height:1;color:#fff;-webkit-text-stroke:2.0px #fff;transform:scaleX(0.815);transform-origin:0 0;white-space:pre">S</div>
<div style="position:absolute;left:2563.51px;top:155.15px;font-family:'Liberation Sans',sans-serif;font-weight:bold;font-size:49px;line-height:1;color:#fff;-webkit-text-stroke:2.0px #fff;transform:scaleX(0.708);transform-origin:0 0;white-space:pre">L</div>
<div style="position:absolute;left:2586.46px;top:155.15px;font-family:'Liberation Sans',sans-serif;font-weight:bold;font-size:49px;line-height:1;color:#fff;-webkit-text-stroke:2.0px #fff;transform:scaleX(0.955);transform-origin:0 0;white-space:pre">A</div>
<div style="position:absolute;left:2622.24px;top:155.15px;font-family:'Liberation Sans',sans-serif;font-weight:bold;font-size:49px;line-height:1;color:#fff;-webkit-text-stroke:2.0px #fff;transform:scaleX(0.852);transform-origin:0 0;white-space:pre">B</div>
<svg style="position:absolute;left:2410px;top:150px;overflow:visible;" width="44" height="52" viewBox="0 0 44 52"><path d="M26.5 17.6 A13.4 13.4 0 1 1 16.1 17.6" stroke="#fff" stroke-width="8.6" fill="none"/><path d="M21.3 9.05 V27.15" stroke="#fff" stroke-width="8.9" stroke-linecap="round"/></svg>
<div style="position:absolute;left:2295.76px;top:206.70px;font-family:'Liberation Sans',sans-serif;font-size:36px;line-height:1;color:#fff;white-space:pre">T</div>
<div style="position:absolute;left:2338.09px;top:206.70px;font-family:'Liberation Sans',sans-serif;font-size:36px;line-height:1;color:#fff;white-space:pre">e</div>
<div style="position:absolute;left:2381.55px;top:206.70px;font-family:'Liberation Sans',sans-serif;font-size:36px;line-height:1;color:#fff;white-space:pre">m</div>
<div style="position:absolute;left:2437.06px;top:206.70px;font-family:'Liberation Sans',sans-serif;font-size:36px;line-height:1;color:#fff;white-space:pre">p</div>
<div style="position:absolute;left:2480.76px;top:206.70px;font-family:'Liberation Sans',sans-serif;font-size:36px;line-height:1;color:#fff;white-space:pre">l</div>
<div style="position:absolute;left:2510.41px;top:206.70px;font-family:'Liberation Sans',sans-serif;font-size:36px;line-height:1;color:#fff;white-space:pre">a</div>
<div style="position:absolute;left:2554.56px;top:206.70px;font-family:'Liberation Sans',sans-serif;font-size:36px;line-height:1;color:#fff;white-space:pre">t</div>
<div style="position:absolute;left:2589.74px;top:206.70px;font-family:'Liberation Sans',sans-serif;font-size:36px;line-height:1;color:#fff;white-space:pre">e</div>
<div style="position:absolute;left:2633.53px;top:206.70px;font-family:'Liberation Sans',sans-serif;font-size:36px;line-height:1;color:#fff;white-space:pre">s</div>
<svg style="position:absolute;left:2849.5px;top:253.05px;overflow:visible;" width="15" height="8.5" viewBox="0 0 15 8.5"><path d="M1 1 L7.5 7.5 L14 1" stroke="#f0f0f0" stroke-width="1.6" fill="none" stroke-linecap="round" stroke-linejoin="round"/></svg>
<svg style="position:absolute;left:30px;top:282px;" width="22" height="21" viewBox="0 0 22 21"><path d="M20 1 V20 H1 Z" fill="#6b6b6b"/></svg>
<div style="position:absolute;left:53px;top:278px;width:36px;height:27px;background:#6a6a6a;"></div>
<div style="position:absolute;left:88.4px;top:279px;width:1.2px;height:26px;background:#6a6a6a;"></div>
<div style="position:absolute;left:137.9px;top:279px;width:1.2px;height:26px;background:#6a6a6a;"></div>
<div style="position:absolute;left:406.4px;top:279px;width:1.2px;height:26px;background:#6a6a6a;"></div>
<div style="position:absolute;left:675.9px;top:279px;width:1.2px;height:26px;background:#6a6a6a;"></div>
<div style="position:absolute;left:944.9px;top:279px;width:1.2px;height:26px;background:#6a6a6a;"></div>
<div style="position:absolute;left:1148.4px;top:279px;width:1.2px;height:26px;background:#6a6a6a;"></div>
<div style="position:absolute;left:1352.4px;top:279px;width:1.2px;height:26px;background:#6a6a6a;"></div>
<div style="position:absolute;left:1559.4px;top:279px;width:1.2px;height:26px;background:#6a6a6a;"></div>
<div style="position:absolute;left:1766.4px;top:279px;width:1.2px;height:26px;background:#6a6a6a;"></div>
<div style="position:absolute;left:1935.4px;top:279px;width:1.2px;height:26px;background:#6a6a6a;"></div>
<div style="position:absolute;left:2104.4px;top:279px;width:1.2px;height:26px;background:#6a6a6a;"></div>
<div style="position:absolute;left:2273.4px;top:279px;width:1.2px;height:26px;background:#6a6a6a;"></div>
<div style="position:absolute;left:2442.4px;top:279px;width:1.2px;height:26px;background:#6a6a6a;"></div>
<div style="position:absolute;left:2611.4px;top:279px;width:1.2px;height:26px;background:#6a6a6a;"></div>
<div style="position:absolute;left:2780.4px;top:279px;width:1.2px;height:26px;background:#6a6a6a;"></div>
<div style="position:absolute;left:64.35px;top:282.93px;font-family:'Liberation Sans', sans-serif;font-size:21.5px;line-height:1;font-weight:normal;color:#f0f0f0;white-space:pre;">A</div>
<div style="position:absolute;left:106.75px;top:282.93px;font-family:'Liberation Sans', sans-serif;font-size:21.5px;line-height:1;font-weight:normal;color:#f0f0f0;white-space:pre;">B</div>
<div style="position:absolute;left:265.35px;top:282.93px;font-family:'Liberation Sans', sans-serif;font-size:21.5px;line-height:1;font-weight:normal;color:#f0f0f0;white-space:pre;">C</div>
<div style="position:absolute;left:534.15px;top:282.93px;font-family:'Liberation Sans', sans-serif;font-size:21.5px;line-height:1;font-weight:normal;color:#f0f0f0;white-space:pre;">D</div>
<div style="position:absolute;left:803.90px;top:282.93px;font-family:'Liberation Sans', sans-serif;font-size:21.5px;line-height:1;font-weight:normal;color:#f0f0f0;white-space:pre;">E</div>
<div style="position:absolute;left:1040.75px;top:282.93px;font-family:'Liberation Sans', sans-serif;font-size:21.5px;line-height:1;font-weight:normal;color:#f0f0f0;white-space:pre;">F</div>
<div style="position:absolute;left:1243.40px;top:282.93px;font-family:'Liberation Sans', sans-serif;font-size:21.5px;line-height:1;font-weight:normal;color:#f0f0f0;white-space:pre;">G</div>
<div style="position:absolute;left:1449.25px;top:282.93px;font-family:'Liberation Sans', sans-serif;font-size:21.5px;line-height:1;font-weight:normal;color:#f0f0f0;white-space:pre;">H</div>
<div style="position:absolute;left:1661.05px;top:282.93px;font-family:'Liberation Sans', sans-serif;font-size:21.5px;line-height:1;font-weight:normal;color:#f0f0f0;white-space:pre;">I</div>
<div style="position:absolute;left:1847.25px;top:282.93px;font-family:'Liberation Sans', sans-serif;font-size:21.5px;line-height:1;font-weight:normal;color:#f0f0f0;white-space:pre;">J</div>
<div style="position:absolute;left:2013.10px;top:282.93px;font-family:'Liberation Sans', sans-serif;font-size:21.5px;line-height:1;font-weight:normal;color:#f0f0f0;white-space:pre;">K</div>
<div style="position:absolute;left:2183.50px;top:282.93px;font-family:'Liberation Sans', sans-serif;font-size:21.5px;line-height:1;font-weight:normal;color:#f0f0f0;white-space:pre;">L</div>
<div style="position:absolute;left:2350.05px;top:282.93px;font-family:'Liberation Sans', sans-serif;font-size:21.5px;line-height:1;font-weight:normal;color:#f0f0f0;white-space:pre;">M</div>
<div style="position:absolute;left:2520.25px;top:282.93px;font-family:'Liberation Sans', sans-serif;font-size:21.5px;line-height:1;font-weight:normal;color:#f0f0f0;white-space:pre;">N</div>
<div style="position:absolute;left:2688.65px;top:282.93px;font-family:'Liberation Sans', sans-serif;font-size:21.5px;line-height:1;font-weight:normal;color:#f0f0f0;white-space:pre;">O</div>
<div style="position:absolute;left:53px;top:304.3px;width:2807px;height:1px;background:#8a8a8a;"></div>
<div style="position:absolute;left:53px;top:303.5px;width:36px;height:2.2px;background:#1f7a45;"></div>
<div style="position:absolute;left:11px;top:305px;width:42px;height:50px;background:#6a6a6a;"></div>
<div style="position:absolute;left:11px;top:354px;width:42px;height:1px;background:#747474;"></div>
<div style="position:absolute;left:25.70px;top:333.33px;font-family:'Liberation Sans', sans-serif;font-size:21.5px;line-height:1;font-weight:normal;color:#f0f0f0;white-space:pre;">1</div>
<div style="position:absolute;left:11px;top:396px;width:42px;height:1px;background:#747474;"></div>
<div style="position:absolute;left:26.05px;top:374.33px;font-family:'Liberation Sans', sans-serif;font-size:21.5px;line-height:1;font-weight:normal;color:#f0f0f0;white-space:pre;">2</div>
<div style="position:absolute;left:11px;top:424px;width:42px;height:1px;background:#747474;"></div>
<div style="position:absolute;left:26.05px;top:402.33px;font-family:'Liberation Sans', sans-serif;font-size:21.5px;line-height:1;font-weight:normal;color:#f0f0f0;white-space:pre;">3</div>
<div style="position:absolute;left:11px;top:456px;width:42px;height:1px;background:#747474;"></div>
<div style="position:absolute;left:26.10px;top:435.33px;font-family:'Liberation Sans', sans-serif;font-size:21.5px;line-height:1;font-weight:normal;color:#f0f0f0;white-space:pre;">4</div>
<div style="position:absolute;left:11px;top:486px;width:42px;height:1px;background:#747474;"></div>
<div style="position:absolute;left:25.95px;top:464.33px;font-family:'Liberation Sans', sans-serif;font-size:21.5px;line-height:1;font-weight:normal;color:#f0f0f0;white-space:pre;">6</div>
<div style="position:absolute;left:11px;top:512px;width:42px;height:1px;background:#747474;"></div>
<div style="position:absolute;left:26.00px;top:491.33px;font-family:'Liberation Sans', sans-serif;font-size:21.5px;line-height:1;font-weight:normal;color:#f0f0f0;white-space:pre;">7</div>
<div style="position:absolute;left:11px;top:542px;width:42px;height:1px;background:#747474;"></div>
<div style="position:absolute;left:19.67px;top:520.33px;font-family:'Liberation Sans', sans-serif;font-size:21.5px;line-height:1;font-weight:normal;color:#f0f0f0;white-space:pre;">13</div>
<div style="position:absolute;left:11px;top:590px;width:42px;height:1px;background:#747474;"></div>
<div style="position:absolute;left:19.52px;top:569.33px;font-family:'Liberation Sans', sans-serif;font-size:21.5px;line-height:1;font-weight:normal;color:#f0f0f0;white-space:pre;">14</div>
<div style="position:absolute;left:11px;top:616px;width:42px;height:1px;background:#747474;"></div>
<div style="position:absolute;left:19.67px;top:594.33px;font-family:'Liberation Sans', sans-serif;font-size:21.5px;line-height:1;font-weight:normal;color:#f0f0f0;white-space:pre;">15</div>
<div style="position:absolute;left:11px;top:650px;width:42px;height:1px;background:#747474;"></div>
<div style="position:absolute;left:19.67px;top:629.33px;font-family:'Liberation Sans', sans-serif;font-size:21.5px;line-height:1;font-weight:normal;color:#f0f0f0;white-space:pre;">16</div>
<div style="position:absolute;left:11px;top:678px;width:42px;height:1px;background:#747474;"></div>
<div style="position:absolute;left:19.77px;top:657.33px;font-family:'Liberation Sans', sans-serif;font-size:21.5px;line-height:1;font-weight:normal;color:#f0f0f0;white-space:pre;">17</div>
<div style="position:absolute;left:11px;top:707px;width:42px;height:1px;background:#747474;"></div>
<div style="position:absolute;left:19.67px;top:685.43px;font-family:'Liberation Sans', sans-serif;font-size:21.5px;line-height:1;font-weight:normal;color:#f0f0f0;white-space:pre;">18</div>
<div style="position:absolute;left:11px;top:735px;width:42px;height:1px;background:#747474;"></div>
<div style="position:absolute;left:19.72px;top:713.43px;font-family:'Liberation Sans', sans-serif;font-size:21.5px;line-height:1;font-weight:normal;color:#f0f0f0;white-space:pre;">19</div>
<div style="position:absolute;left:11px;top:763px;width:42px;height:1px;background:#747474;"></div>
<div style="position:absolute;left:19.92px;top:741.53px;font-family:'Liberation Sans', sans-serif;font-size:21.5px;line-height:1;font-weight:normal;color:#f0f0f0;white-space:pre;">20</div>
<div style="position:absolute;left:11px;top:791px;width:42px;height:1px;background:#747474;"></div>
<div style="position:absolute;left:20.02px;top:769.53px;font-family:'Liberation Sans', sans-serif;font-size:21.5px;line-height:1;font-weight:normal;color:#f0f0f0;white-space:pre;">21</div>
<div style="position:absolute;left:11px;top:819px;width:42px;height:1px;background:#747474;"></div>
<div style="position:absolute;left:20.07px;top:797.62px;font-family:'Liberation Sans', sans-serif;font-size:21.5px;line-height:1;font-weight:normal;color:#f0f0f0;white-space:pre;">22</div>
<div style="position:absolute;left:11px;top:847px;width:42px;height:1px;background:#747474;"></div>
<div style="position:absolute;left:19.97px;top:825.62px;font-family:'Liberation Sans', sans-serif;font-size:21.5px;line-height:1;font-weight:normal;color:#f0f0f0;white-space:pre;">23</div>
<div style="position:absolute;left:11px;top:875px;width:42px;height:1px;background:#747474;"></div>
<div style="position:absolute;left:19.82px;top:853.73px;font-family:'Liberation Sans', sans-serif;font-size:21.5px;line-height:1;font-weight:normal;color:#f0f0f0;white-space:pre;">24</div>
<div style="position:absolute;left:11px;top:903px;width:42px;height:1px;background:#747474;"></div>
<div style="position:absolute;left:19.97px;top:881.73px;font-family:'Liberation Sans', sans-serif;font-size:21.5px;line-height:1;font-weight:normal;color:#f0f0f0;white-space:pre;">25</div>
<div style="position:absolute;left:11px;top:931px;width:42px;height:1px;background:#747474;"></div>
<div style="position:absolute;left:19.97px;top:909.83px;font-family:'Liberation Sans', sans-serif;font-size:21.5px;line-height:1;font-weight:normal;color:#f0f0f0;white-space:pre;">26</div>
<div style="position:absolute;left:11px;top:959px;width:42px;height:1px;background:#747474;"></div>
<div style="position:absolute;left:20.07px;top:937.83px;font-family:'Liberation Sans', sans-serif;font-size:21.5px;line-height:1;font-weight:normal;color:#f0f0f0;white-space:pre;">27</div>
<div style="position:absolute;left:11px;top:987px;width:42px;height:1px;background:#747474;"></div>
<div style="position:absolute;left:19.97px;top:965.93px;font-family:'Liberation Sans', sans-serif;font-size:21.5px;line-height:1;font-weight:normal;color:#f0f0f0;white-space:pre;">28</div>
<div style="position:absolute;left:11px;top:1015px;width:42px;height:1px;background:#747474;"></div>
<div style="position:absolute;left:20.02px;top:993.93px;font-family:'Liberation Sans', sans-serif;font-size:21.5px;line-height:1;font-weight:normal;color:#f0f0f0;white-space:pre;">29</div>
<div style="position:absolute;left:11px;top:1043px;width:42px;height:1px;background:#747474;"></div>
<div style="position:absolute;left:20.02px;top:1022.02px;font-family:'Liberation Sans', sans-serif;font-size:21.5px;line-height:1;font-weight:normal;color:#f0f0f0;white-space:pre;">30</div>
<div style="position:absolute;left:11px;top:1071px;width:42px;height:1px;background:#747474;"></div>
<div style="position:absolute;left:20.12px;top:1050.02px;font-family:'Liberation Sans', sans-serif;font-size:21.5px;line-height:1;font-weight:normal;color:#f0f0f0;white-space:pre;">31</div>
<div style="position:absolute;left:11px;top:1099px;width:42px;height:1px;background:#747474;"></div>
<div style="position:absolute;left:20.17px;top:1078.12px;font-family:'Liberation Sans', sans-serif;font-size:21.5px;line-height:1;font-weight:normal;color:#f0f0f0;white-space:pre;">32</div>
<div style="position:absolute;left:11px;top:1127px;width:42px;height:1px;background:#747474;"></div>
<div style="position:absolute;left:20.07px;top:1106.12px;font-family:'Liberation Sans', sans-serif;font-size:21.5px;line-height:1;font-weight:normal;color:#f0f0f0;white-space:pre;">33</div>
<div style="position:absolute;left:11px;top:1155px;width:42px;height:1px;background:#747474;"></div>
<div style="position:absolute;left:19.92px;top:1134.22px;font-family:'Liberation Sans', sans-serif;font-size:21.5px;line-height:1;font-weight:normal;color:#f0f0f0;white-space:pre;">34</div>
<div style="position:absolute;left:11px;top:1183px;width:42px;height:1px;background:#747474;"></div>
<div style="position:absolute;left:20.07px;top:1162.22px;font-family:'Liberation Sans', sans-serif;font-size:21.5px;line-height:1;font-weight:normal;color:#f0f0f0;white-space:pre;">35</div>
<div style="position:absolute;left:11px;top:1212px;width:42px;height:1px;background:#747474;"></div>
<div style="position:absolute;left:20.07px;top:1190.32px;font-family:'Liberation Sans', sans-serif;font-size:21.5px;line-height:1;font-weight:normal;color:#f0f0f0;white-space:pre;">36</div>
<div style="position:absolute;left:11px;top:1247px;width:42px;height:1px;background:#747474;"></div>
<div style="position:absolute;left:20.17px;top:1225.82px;font-family:'Liberation Sans', sans-serif;font-size:21.5px;line-height:1;font-weight:normal;color:#f0f0f0;white-space:pre;">37</div>
<div style="position:absolute;left:11px;top:1274px;width:42px;height:1px;background:#747474;"></div>
<div style="position:absolute;left:20.07px;top:1253.32px;font-family:'Liberation Sans', sans-serif;font-size:21.5px;line-height:1;font-weight:normal;color:#f0f0f0;white-space:pre;">38</div>
<div style="position:absolute;left:11px;top:1302px;width:42px;height:1px;background:#747474;"></div>
<div style="position:absolute;left:20.12px;top:1281.32px;font-family:'Liberation Sans', sans-serif;font-size:21.5px;line-height:1;font-weight:normal;color:#f0f0f0;white-space:pre;">39</div>
<div style="position:absolute;left:11px;top:1344px;width:42px;height:1px;background:#747474;"></div>
<div style="position:absolute;left:20.22px;top:1323.32px;font-family:'Liberation Sans', sans-serif;font-size:21.5px;line-height:1;font-weight:normal;color:#f0f0f0;white-space:pre;">40</div>
<div style="position:absolute;left:11px;top:1372px;width:42px;height:1px;background:#747474;"></div>
<div style="position:absolute;left:20.32px;top:1351.32px;font-family:'Liberation Sans', sans-serif;font-size:21.5px;line-height:1;font-weight:normal;color:#f0f0f0;white-space:pre;">41</div>
<div style="position:absolute;left:11px;top:1400px;width:42px;height:1px;background:#747474;"></div>
<div style="position:absolute;left:20.37px;top:1379.32px;font-family:'Liberation Sans', sans-serif;font-size:21.5px;line-height:1;font-weight:normal;color:#f0f0f0;white-space:pre;">42</div>
<div style="position:absolute;left:11px;top:1429px;width:42px;height:1px;background:#747474;"></div>
<div style="position:absolute;left:20.27px;top:1407.82px;font-family:'Liberation Sans', sans-serif;font-size:21.5px;line-height:1;font-weight:normal;color:#f0f0f0;white-space:pre;">43</div>
<div style="position:absolute;left:11px;top:1457px;width:42px;height:1px;background:#747474;"></div>
<div style="position:absolute;left:20.12px;top:1435.82px;font-family:'Liberation Sans', sans-serif;font-size:21.5px;line-height:1;font-weight:normal;color:#f0f0f0;white-space:pre;">44</div>
<div style="position:absolute;left:11px;top:1486px;width:42px;height:1px;background:#747474;"></div>
<div style="position:absolute;left:20.27px;top:1464.32px;font-family:'Liberation Sans', sans-serif;font-size:21.5px;line-height:1;font-weight:normal;color:#f0f0f0;white-space:pre;">45</div>
<div style="position:absolute;left:11px;top:1528px;width:42px;height:1px;background:#747474;"></div>
<div style="position:absolute;left:20.27px;top:1506.32px;font-family:'Liberation Sans', sans-serif;font-size:21.5px;line-height:1;font-weight:normal;color:#f0f0f0;white-space:pre;">46</div>
<div style="position:absolute;left:11px;top:1556px;width:42px;height:1px;background:#747474;"></div>
<div style="position:absolute;left:20.37px;top:1534.32px;font-family:'Liberation Sans', sans-serif;font-size:21.5px;line-height:1;font-weight:normal;color:#f0f0f0;white-space:pre;">47</div>
<div style="position:absolute;left:11px;top:1584px;width:42px;height:1px;background:#747474;"></div>
<div style="position:absolute;left:20.27px;top:1562.32px;font-family:'Liberation Sans', sans-serif;font-size:21.5px;line-height:1;font-weight:normal;color:#f0f0f0;white-space:pre;">48</div>
<div style="position:absolute;left:11px;top:1612px;width:42px;height:1px;background:#747474;"></div>
<div style="position:absolute;left:20.32px;top:1590.32px;font-family:'Liberation Sans', sans-serif;font-size:21.5px;line-height:1;font-weight:normal;color:#f0f0f0;white-space:pre;">49</div>
<div style="position:absolute;left:11px;top:1654px;width:42px;height:1px;background:#747474;"></div>
<div style="position:absolute;left:20.02px;top:1632.32px;font-family:'Liberation Sans', sans-serif;font-size:21.5px;line-height:1;font-weight:normal;color:#f0f0f0;white-space:pre;">50</div>
<div style="position:absolute;left:11px;top:456px;width:42px;height:1px;background:#747474;"></div>
<div style="position:absolute;left:11px;top:460px;width:42px;height:1px;background:#747474;"></div>
<div style="position:absolute;left:11px;top:512px;width:42px;height:1px;background:#747474;"></div>
<div style="position:absolute;left:11px;top:516px;width:42px;height:1px;background:#747474;"></div>
<div style="position:absolute;left:52px;top:305px;width:2px;height:50px;background:#1f7a45;"></div>
<div style="position:absolute;left:2861px;top:281px;width:28px;height:1389px;background:#141414;border-radius:14px 14px 14px 14px"></div>
<svg style="position:absolute;left:2868px;top:285px;" width="16" height="12" viewBox="0 0 16 12"><path d="M8 1 L15 11 H1 Z" fill="#9a9a9a" stroke="#9a9a9a" stroke-linejoin="round" stroke-width="1.5"/></svg>
<div style="position:absolute;left:2870px;top:304px;width:12px;height:1310px;background:#9e9e9e;border-radius:6px"></div>
<svg style="position:absolute;left:2868px;top:1652px;" width="16" height="12" viewBox="0 0 16 12"><path d="M8 11 L15 1 H1 Z" fill="#9a9a9a" stroke="#9a9a9a" stroke-linejoin="round" stroke-width="1.5"/></svg>
<div style="position:absolute;left:800px;top:1669px;width:150px;height:12px;background:#ffffff;"></div>
<div style="position:absolute;left:11px;top:1670px;width:821px;height:48px;background:#0a0a0a;border-top-right-radius:7px"></div>
<div style="position:absolute;left:919px;top:1670px;width:1972px;height:48px;background:#0a0a0a;border-top-left-radius:7px"></div>
<svg style="position:absolute;left:44px;top:1680px;" width="14" height="22" viewBox="0 0 14 22"><path d="M11 2 L3 11 L11 20" stroke="#9a9a9a" stroke-width="1.6" fill="none"/></svg>
<svg style="position:absolute;left:93px;top:1680px;" width="14" height="22" viewBox="0 0 14 22"><path d="M3 2 L11 11 L3 20" stroke="#9a9a9a" stroke-width="1.6" fill="none"/></svg>
<div style="position:absolute;left:189.50px;top:1685.58px;font-family:'Liberation Sans', sans-serif;font-size:20.5px;line-height:1;font-weight:normal;color:#f2f2f2;white-space:pre;letter-spacing:0.171px;">Contents</div>
<div style="position:absolute;left:291.5px;top:1683px;width:1.2px;height:24px;background:#4a4a4a;"></div>
<div style="position:absolute;left:432.9px;top:1683px;width:1.2px;height:24px;background:#4a4a4a;"></div>
<div style="position:absolute;left:552.3px;top:1683px;width:1.2px;height:24px;background:#4a4a4a;"></div>
<div style="position:absolute;left:723.1px;top:1683px;width:1.2px;height:24px;background:#4a4a4a;"></div>
<div style="position:absolute;left:825.5px;top:1683px;width:1.2px;height:24px;background:#4a4a4a;"></div>
<div style="position:absolute;left:1050.5px;top:1683px;width:1.2px;height:24px;background:#4a4a4a;"></div>
<div style="position:absolute;left:1154.4px;top:1683px;width:1.2px;height:24px;background:#4a4a4a;"></div>
<div style="position:absolute;left:1208.5px;top:1683px;width:1.2px;height:24px;background:#4a4a4a;"></div>
<div style="position:absolute;left:1269.9px;top:1683px;width:1.2px;height:24px;background:#4a4a4a;"></div>
<div style="position:absolute;left:1330.5px;top:1683px;width:1.2px;height:24px;background:#4a4a4a;"></div>
<div style="position:absolute;left:1459.2px;top:1683px;width:1.2px;height:24px;background:#4a4a4a;"></div>
<div style="position:absolute;left:1586.8px;top:1683px;width:1.2px;height:24px;background:#4a4a4a;"></div>
<div style="position:absolute;left:1713.5px;top:1683px;width:1.2px;height:24px;background:#4a4a4a;"></div>
<div style="position:absolute;left:1774.5px;top:1683px;width:1.2px;height:24px;background:#4a4a4a;"></div>
<div style="position:absolute;left:1860.0px;top:1683px;width:1.2px;height:24px;background:#4a4a4a;"></div>
<div style="position:absolute;left:1958.5px;top:1683px;width:1.2px;height:24px;background:#4a4a4a;"></div>
<div style="position:absolute;left:2035.1px;top:1683px;width:1.2px;height:24px;background:#4a4a4a;"></div>
<div style="position:absolute;left:299px;top:1676.5px;width:128px;height:35px;border-radius:6px;background:#fde96b"></div>
<div style="position:absolute;left:311.70px;top:1685.58px;font-family:'Liberation Sans', sans-serif;font-size:20.5px;line-height:1;font-weight:normal;color:#1a1a1a;white-space:pre;letter-spacing:0.252px;">Dashboard</div>
<div style="position:absolute;left:440px;top:1676.5px;width:106px;height:35px;border-radius:6px;background:#fde96b"></div>
<div style="position:absolute;left:452.40px;top:1685.58px;font-family:'Liberation Sans', sans-serif;font-size:20.5px;line-height:1;font-weight:normal;color:#1a1a1a;white-space:pre;letter-spacing:-0.260px;">Revenue</div>
<div style="position:absolute;left:559px;top:1676.5px;width:157.70000000000005px;height:35px;border-radius:6px;background:#fde96b"></div>
<div style="position:absolute;left:570.25px;top:1685.58px;font-family:'Liberation Sans', sans-serif;font-size:20.5px;line-height:1;font-weight:normal;color:#1a1a1a;white-space:pre;letter-spacing:-0.783px;">COGS &amp; OPEX</div>
<div style="position:absolute;left:730.5px;top:1676.5px;width:88.5px;height:35px;border-radius:6px;background:#fde96b"></div>
<div style="position:absolute;left:742.90px;top:1685.58px;font-family:'Liberation Sans', sans-serif;font-size:20.5px;line-height:1;font-weight:normal;color:#1a1a1a;white-space:pre;letter-spacing:0.132px;">Payroll</div>
<div style="position:absolute;left:932.5px;top:1676.5px;width:112.0px;height:35px;border-radius:6px;background:#fde96b"></div>
<div style="position:absolute;left:944.90px;top:1685.58px;font-family:'Liberation Sans', sans-serif;font-size:20.5px;line-height:1;font-weight:normal;color:#1a1a1a;white-space:pre;letter-spacing:0.070px;">CapTable</div>
<div style="position:absolute;left:1058.3px;top:1676.5px;width:89.29999999999995px;height:35px;border-radius:6px;background:#fde96b"></div>
<div style="position:absolute;left:1070.30px;top:1685.58px;font-family:'Liberation Sans', sans-serif;font-size:20.5px;line-height:1;font-weight:normal;color:#1a1a1a;white-space:pre;letter-spacing:0.307px;">Capital</div>
<div style="position:absolute;left:1161px;top:1676.5px;width:41.799999999999955px;height:35px;border-radius:6px;background:#4bb2e6"></div>
<div style="position:absolute;left:1172.40px;top:1685.58px;font-family:'Liberation Sans', sans-serif;font-size:20.5px;line-height:1;font-weight:normal;color:#1a1a1a;white-space:pre;letter-spacing:-1.296px;">IS</div>
<div style="position:absolute;left:1215.7px;top:1676.5px;width:47.899999999999864px;height:35px;border-radius:6px;background:#4bb2e6"></div>
<div style="position:absolute;left:1227.25px;top:1685.58px;font-family:'Liberation Sans', sans-serif;font-size:20.5px;line-height:1;font-weight:normal;color:#1a1a1a;white-space:pre;letter-spacing:-2.804px;">CF</div>
<div style="position:absolute;left:1276.6px;top:1676.5px;width:47.90000000000009px;height:35px;border-radius:6px;background:#4bb2e6"></div>
<div style="position:absolute;left:1288.00px;top:1685.58px;font-family:'Liberation Sans', sans-serif;font-size:20.5px;line-height:1;font-weight:normal;color:#1a1a1a;white-space:pre;letter-spacing:-2.973px;">BS</div>
<div style="position:absolute;left:1338.3px;top:1676.5px;width:114.5px;height:35px;border-radius:6px;background:#4bb2e6"></div>
<div style="position:absolute;left:1351.25px;top:1685.58px;font-family:'Liberation Sans', sans-serif;font-size:20.5px;line-height:1;font-weight:normal;color:#1a1a1a;white-space:pre;letter-spacing:-0.351px;">Scenarios</div>
<div style="position:absolute;left:1466.2px;top:1676.5px;width:114.39999999999986px;height:35px;border-radius:6px;background:#4bb2e6"></div>
<div style="position:absolute;left:1479.95px;top:1685.58px;font-family:'Liberation Sans', sans-serif;font-size:20.5px;line-height:1;font-weight:normal;color:#1a1a1a;white-space:pre;letter-spacing:0.530px;">Valuation</div>
<div style="position:absolute;left:1594px;top:1676.5px;width:113.59999999999991px;height:35px;border-radius:6px;background:#4bb2e6"></div>
<div style="position:absolute;left:1606.70px;top:1685.58px;font-family:'Liberation Sans', sans-serif;font-size:20.5px;line-height:1;font-weight:normal;color:#1a1a1a;white-space:pre;letter-spacing:-0.076px;">Summary</div>
<div style="position:absolute;left:1721px;top:1676.5px;width:47.5px;height:35px;border-radius:6px;background:#4bb2e6"></div>
<div style="position:absolute;left:1731.00px;top:1685.58px;font-family:'Liberation Sans', sans-serif;font-size:20.5px;line-height:1;font-weight:normal;color:#1a1a1a;white-space:pre;letter-spacing:-0.573px;">BE</div>
<div style="position:absolute;left:1781.9px;top:1676.5px;width:71.79999999999995px;height:35px;border-radius:6px;background:#4bb2e6"></div>
<div style="position:absolute;left:1793.90px;top:1685.58px;font-family:'Liberation Sans', sans-serif;font-size:20.5px;line-height:1;font-weight:normal;color:#1a1a1a;white-space:pre;letter-spacing:-1.449px;">ROIC</div>
<div style="position:absolute;left:1867px;top:1676.5px;width:84.59999999999991px;height:35px;border-radius:6px;background:#4bb2e6"></div>
<div style="position:absolute;left:1879.45px;top:1685.58px;font-family:'Liberation Sans', sans-serif;font-size:20.5px;line-height:1;font-weight:normal;color:#1a1a1a;white-space:pre;letter-spacing:-0.206px;">Charts</div>
<div style="position:absolute;left:1965.3px;top:1676.5px;width:63.200000000000045px;height:35px;border-radius:6px;background:#4bb2e6"></div>
<div style="position:absolute;left:1976.50px;top:1685.58px;font-family:'Liberation Sans', sans-serif;font-size:20.5px;line-height:1;font-weight:normal;color:#1a1a1a;white-space:pre;letter-spacing:-1.147px;">KPIs</div>
<div style="position:absolute;left:2042px;top:1676.5px;width:30px;height:35px;border-radius:6px 0 0 6px;background:#4bb2e6;overflow:hidden"><div style="position:absolute;left:8px;top:5px;font-family:Liberation Sans;font-size:20.5px;color:#1a1a1a">Sc</div></div>
<div style="position:absolute;left:832px;top:1669px;width:87px;height:43px;border-radius:0 0 7px 7px;background:#fdfcf2"></div>
<div style="position:absolute;left:843.75px;top:1680.58px;font-family:'Liberation Sans', sans-serif;font-size:20.5px;line-height:1;font-weight:normal;color:#1a1a1a;white-space:pre;letter-spacing:-1.656px;">CAPEX</div>
<div style="position:absolute;left:844px;top:1705px;width:63px;height:3px;background:#1f7a45;"></div>
<div style="position:absolute;left:2087.0px;top:1690.5px;width:4px;height:4px;border-radius:50%;background:#e8e8e8"></div>
<div style="position:absolute;left:2093.2px;top:1690.5px;width:4px;height:4px;border-radius:50%;background:#e8e8e8"></div>
<div style="position:absolute;left:2099.4px;top:1690.5px;width:4px;height:4px;border-radius:50%;background:#e8e8e8"></div>
<div style="position:absolute;left:2135px;top:1692.5px;width:16px;height:1.6px;background:#e8e8e8;"></div>
<div style="position:absolute;left:2142.2px;top:1685px;width:1.6px;height:16px;background:#e8e8e8;"></div>
<div style="position:absolute;left:2190.5px;top:1686.5px;width:3.4px;height:3.4px;border-radius:1px;background:#e8e8e8"></div>
<div style="position:absolute;left:2190.5px;top:1692.8px;width:3.4px;height:3.4px;border-radius:1px;background:#e8e8e8"></div>
<div style="position:absolute;left:2190.5px;top:1699.1px;width:3.4px;height:3.4px;border-radius:1px;background:#e8e8e8"></div>
<div style="position:absolute;left:2216px;top:1680px;width:644px;height:26px;border-radius:13px;background:#181818"></div>
<svg style="position:absolute;left:2221px;top:1686px;" width="12" height="14" viewBox="0 0 12 14"><path d="M1 7 L11 1 V13 Z" fill="#9a9a9a" stroke="#9a9a9a" stroke-linejoin="round" stroke-width="1.2"/></svg>
<div style="position:absolute;left:2242px;top:1687.5px;width:55px;height:11px;border-radius:6px;background:#9e9e9e"></div>
<svg style="position:absolute;left:2840px;top:1686px;" width="12" height="14" viewBox="0 0 12 14"><path d="M11 7 L1 1 V13 Z" fill="#9a9a9a" stroke="#9a9a9a" stroke-linejoin="round" stroke-width="1.2"/></svg>
<div style="position:absolute;left:11px;top:1718px;width:2880px;height:33px;background:#141414;"></div>
<div style="position:absolute;left:11px;top:1717.5px;width:2880px;height:1.2px;background:#3a3a3a;"></div>
<div style="position:absolute;left:11px;top:1669.5px;width:42px;height:1.2px;background:#555;"></div>
<div style="position:absolute;left:26.10px;top:1727.40px;font-family:'Liberation Sans', sans-serif;font-size:16px;line-height:1;font-weight:normal;color:#f2f2f2;white-space:pre;letter-spacing:-0.738px;">Ready</div>
<svg style="position:absolute;left:98px;top:1726px;" width="24" height="20" viewBox="0 0 24 20"><rect x="1" y="1" width="20" height="17" stroke="#e0e0e0" stroke-width="1.4" fill="none"/><path d="M1 5 H21 M4 9 H9 M4 13 H8" stroke="#e0e0e0" stroke-width="1.3"/><circle cx="15" cy="13" r="4.5" stroke="#e0e0e0" stroke-width="1.4" fill="#141414"/><circle cx="15" cy="13" r="1.8" fill="#e0e0e0"/></svg>
<svg style="position:absolute;left:145px;top:1723px;" width="24" height="24" viewBox="0 0 24 24"><circle cx="10" cy="3.6" r="2.4" stroke="#e8e8e8" stroke-width="1.5" fill="none"/><path d="M2 7.5 Q6 9.5 10 9.2 Q14 9.5 18 7.5 M10 9.2 V14.5 L5.5 21.5 M10 14.5 L12.5 18" stroke="#e8e8e8" stroke-width="2" fill="none" stroke-linecap="round"/><path d="M14.5 16.5 L21.5 22.5 M21.5 16.5 L14.5 22.5" stroke="#e8e8e8" stroke-width="1.6"/></svg>
<div style="position:absolute;left:172.70px;top:1727.40px;font-family:'Liberation Sans', sans-serif;font-size:16px;line-height:1;font-weight:bold;color:#f2f2f2;white-space:pre;letter-spacing:-0.136px;">Accessibility: Investigate</div>
<div style="position:absolute;left:2445.6px;top:1718.5px;width:60px;height:32px;background:#262626;"></div>
<svg style="position:absolute;left:2464px;top:1724px;" width="22" height="21" viewBox="0 0 22 21"><path d="M1 1 H21 V20 H1 Z M1 7.3 H21 M1 13.6 H21 M7.6 1 V20 M14.3 1 V20" stroke="#e0e0e0" stroke-width="1.5" fill="none"/></svg>
<svg style="position:absolute;left:2524px;top:1724px;" width="23" height="21" viewBox="0 0 23 21"><rect x="1" y="1" width="21" height="19" stroke="#e0e0e0" stroke-width="1.5" fill="none"/><rect x="5" y="4" width="13" height="13" stroke="#e0e0e0" stroke-width="1.3" fill="none"/><path d="M7.5 8 H15.5 M7.5 11 H15.5 M7.5 14 H15.5" stroke="#e0e0e0" stroke-width="1.2"/></svg>
<svg style="position:absolute;left:2583px;top:1723px;" width="24" height="22" viewBox="0 0 24 22"><path d="M1 1 H23 V21 H1 Z M8 1 V10 H15 V1" stroke="#e0e0e0" stroke-width="1.6" fill="none"/></svg>
<div style="position:absolute;left:2632px;top:1734.5px;width:12px;height:1.4px;background:#e0e0e0;"></div>
<div style="position:absolute;left:2653px;top:1734.5px;width:148px;height:1.2px;background:#a0a0a0;"></div>
<div style="position:absolute;left:2725px;top:1730px;width:1.2px;height:10px;background:#a0a0a0;"></div>
<div style="position:absolute;left:2734.5px;top:1726px;width:8px;height:18px;background:#a8a8a8;"></div>
<div style="position:absolute;left:2808px;top:1734.5px;width:14px;height:1.4px;background:#e0e0e0;"></div>
<div style="position:absolute;left:2814.3px;top:1728.3px;width:1.4px;height:14px;background:#e0e0e0;"></div>
<div style="position:absolute;left:2838.50px;top:1727.40px;font-family:'Liberation Sans', sans-serif;font-size:16px;line-height:1;font-weight:normal;color:#f2f2f2;white-space:pre;letter-spacing:0.035px;">140%</div>
<div style="position:absolute;left:53px;top:305px;width:2807px;height:1365px;background:#ffffff;"></div>
<div style="position:absolute;left:95.38px;top:311.00px;font-family:'Liberation Sans', sans-serif;font-size:40px;line-height:1;font-weight:bold;color:#222222;white-space:pre;letter-spacing:0.163px;-webkit-text-stroke:1.1px #222;">Startup Costs (CAPEX)</div>
<div style="position:absolute;left:94.75px;top:359.25px;font-family:'Liberation Sans', sans-serif;font-size:35px;line-height:1;font-weight:bold;color:#000;white-space:pre;letter-spacing:0.039px;-webkit-text-stroke:1px #000;">ABC Company Inc.</div>
<div style="position:absolute;left:92.60px;top:398.88px;font-family:'Liberation Sans', sans-serif;font-size:22.5px;line-height:1;font-weight:bold;color:#2f7ae6;white-space:pre;letter-spacing:0.296px;-webkit-text-stroke-width:0.4px;">Go to Table of Contents</div>
<div style="position:absolute;left:93.5px;top:419.5px;width:258px;height:2px;background:#2f7ae6;"></div>
<div style="position:absolute;left:92.10px;top:462.27px;font-family:'Liberation Sans', sans-serif;font-size:22.5px;line-height:1;font-weight:bold;color:#000;white-space:pre;letter-spacing:0.357px;-webkit-text-stroke-width:0.45px;">Fiscal Year</div>
<div style="position:absolute;left:92.10px;top:489.88px;font-family:'Liberation Sans', sans-serif;font-size:22.5px;line-height:1;font-weight:bold;color:#000;white-space:pre;letter-spacing:0.900px;-webkit-text-stroke-width:0.45px;">Month</div>
<div style="position:absolute;left:1708.30px;top:462.27px;font-family:'Liberation Sans', sans-serif;font-size:22.5px;line-height:1;font-weight:bold;color:#000;white-space:pre;letter-spacing:1.420px;-webkit-text-stroke-width:0.45px;">2025</div>
<div style="position:absolute;left:1684.50px;top:489.88px;font-family:'Liberation Sans', sans-serif;font-size:22.5px;line-height:1;font-weight:bold;color:#000;white-space:pre;letter-spacing:0.864px;-webkit-text-stroke-width:0.45px;">Dec-25</div>
<div style="position:absolute;left:1877.30px;top:462.27px;font-family:'Liberation Sans', sans-serif;font-size:22.5px;line-height:1;font-weight:bold;color:#000;white-space:pre;letter-spacing:1.487px;-webkit-text-stroke-width:0.45px;">2026</div>
<div style="position:absolute;left:1854.70px;top:489.88px;font-family:'Liberation Sans', sans-serif;font-size:22.5px;line-height:1;font-weight:bold;color:#000;white-space:pre;letter-spacing:1.165px;-webkit-text-stroke-width:0.45px;">Jan-26</div>
<div style="position:absolute;left:2046.30px;top:462.27px;font-family:'Liberation Sans', sans-serif;font-size:22.5px;line-height:1;font-weight:bold;color:#000;white-space:pre;letter-spacing:1.487px;-webkit-text-stroke-width:0.45px;">2026</div>
<div style="position:absolute;left:2022.50px;top:489.88px;font-family:'Liberation Sans', sans-serif;font-size:22.5px;line-height:1;font-weight:bold;color:#000;white-space:pre;letter-spacing:1.159px;-webkit-text-stroke-width:0.45px;">Feb-26</div>
<div style="position:absolute;left:2215.30px;top:462.27px;font-family:'Liberation Sans', sans-serif;font-size:22.5px;line-height:1;font-weight:bold;color:#000;white-space:pre;letter-spacing:1.487px;-webkit-text-stroke-width:0.45px;">2026</div>
<div style="position:absolute;left:2191.50px;top:489.88px;font-family:'Liberation Sans', sans-serif;font-size:22.5px;line-height:1;font-weight:bold;color:#000;white-space:pre;letter-spacing:1.156px;-webkit-text-stroke-width:0.45px;">Mar-26</div>
<div style="position:absolute;left:2384.30px;top:462.27px;font-family:'Liberation Sans', sans-serif;font-size:22.5px;line-height:1;font-weight:bold;color:#000;white-space:pre;letter-spacing:1.487px;-webkit-text-stroke-width:0.45px;">2026</div>
<div style="position:absolute;left:2361.50px;top:489.88px;font-family:'Liberation Sans', sans-serif;font-size:22.5px;line-height:1;font-weight:bold;color:#000;white-space:pre;letter-spacing:1.209px;-webkit-text-stroke-width:0.45px;">Apr-26</div>
<div style="position:absolute;left:2553.30px;top:462.27px;font-family:'Liberation Sans', sans-serif;font-size:22.5px;line-height:1;font-weight:bold;color:#000;white-space:pre;letter-spacing:1.487px;-webkit-text-stroke-width:0.45px;">2026</div>
<div style="position:absolute;left:2529.50px;top:489.88px;font-family:'Liberation Sans', sans-serif;font-size:22.5px;line-height:1;font-weight:bold;color:#000;white-space:pre;letter-spacing:0.405px;-webkit-text-stroke-width:0.45px;">May-26</div>
<div style="position:absolute;left:2722.30px;top:462.27px;font-family:'Liberation Sans', sans-serif;font-size:22.5px;line-height:1;font-weight:bold;color:#000;white-space:pre;letter-spacing:1.487px;-webkit-text-stroke-width:0.45px;">2026</div>
<div style="position:absolute;left:2699.70px;top:489.88px;font-family:'Liberation Sans', sans-serif;font-size:22.5px;line-height:1;font-weight:bold;color:#000;white-space:pre;letter-spacing:0.919px;-webkit-text-stroke-width:0.45px;">Jun-26</div>
<div style="position:absolute;left:53px;top:513.5px;width:2807px;height:1.3px;background:#a6a6a6;"></div>
<div style="position:absolute;left:95.78px;top:547.70px;font-family:'Liberation Sans', sans-serif;font-size:40px;line-height:1;font-weight:bold;color:#222222;white-space:pre;letter-spacing:0.325px;-webkit-text-stroke:1.1px #222;">Startup Costs, $</div>
<div style="position:absolute;left:139px;top:617px;width:1628px;height:32.5px;background:#6e76e8;"></div>
<div style="position:absolute;left:944.0px;top:616px;width:3px;height:36px;background:#ffffff;"></div>
<div style="position:absolute;left:1147.5px;top:616px;width:3px;height:36px;background:#ffffff;"></div>
<div style="position:absolute;left:1351.5px;top:616px;width:3px;height:36px;background:#ffffff;"></div>
<div style="position:absolute;left:1558.5px;top:616px;width:3px;height:36px;background:#ffffff;"></div>
<div style="position:absolute;left:482.40px;top:622.88px;font-family:'Liberation Sans', sans-serif;font-size:22.5px;line-height:1;font-weight:bold;color:#fff;white-space:pre;letter-spacing:0.469px;-webkit-text-stroke-width:0.45px;">Categories</div>
<div style="position:absolute;left:979.55px;top:622.88px;font-family:'Liberation Sans', sans-serif;font-size:22.5px;line-height:1;font-weight:bold;color:#fff;white-space:pre;letter-spacing:0.340px;-webkit-text-stroke-width:0.45px;">Launch date</div>
<div style="position:absolute;left:1202.75px;top:622.88px;font-family:'Liberation Sans', sans-serif;font-size:22.5px;line-height:1;font-weight:bold;color:#fff;white-space:pre;letter-spacing:0.415px;-webkit-text-stroke-width:0.45px;">End date</div>
<div style="position:absolute;left:1391.70px;top:622.88px;font-family:'Liberation Sans', sans-serif;font-size:22.5px;line-height:1;font-weight:bold;color:#fff;white-space:pre;letter-spacing:0.381px;-webkit-text-stroke-width:0.45px;">Spending, $</div>
<div style="position:absolute;left:1590.90px;top:622.88px;font-family:'Liberation Sans', sans-serif;font-size:22.5px;line-height:1;font-weight:bold;color:#fff;white-space:pre;letter-spacing:0.448px;-webkit-text-stroke-width:0.45px;">Amortizable?</div>
<div style="position:absolute;left:140px;top:653px;width:1627px;height:559px;background:#fff16a;"></div>
<div style="position:absolute;left:140px;top:678.7px;width:1627px;height:1.3px;background:#fdf8c8;"></div>
<div style="position:absolute;left:140px;top:706.8000000000001px;width:1627px;height:1.3px;background:#fdf8c8;"></div>
<div style="position:absolute;left:140px;top:734.8000000000001px;width:1627px;height:1.3px;background:#fdf8c8;"></div>
<div style="position:absolute;left:140px;top:762.9000000000001px;width:1627px;height:1.3px;background:#fdf8c8;"></div>
<div style="position:absolute;left:140px;top:790.9000000000001px;width:1627px;height:1.3px;background:#fdf8c8;"></div>
<div style="position:absolute;left:140px;top:819.0px;width:1627px;height:1.3px;background:#fdf8c8;"></div>
<div style="position:absolute;left:140px;top:847.0px;width:1627px;height:1.3px;background:#fdf8c8;"></div>
<div style="position:absolute;left:140px;top:875.1px;width:1627px;height:1.3px;background:#fdf8c8;"></div>
<div style="position:absolute;left:140px;top:903.1px;width:1627px;height:1.3px;background:#fdf8c8;"></div>
<div style="position:absolute;left:140px;top:931.2px;width:1627px;height:1.3px;background:#fdf8c8;"></div>
<div style="position:absolute;left:140px;top:959.2px;width:1627px;height:1.3px;background:#fdf8c8;"></div>
<div style="position:absolute;left:140px;top:987.3000000000001px;width:1627px;height:1.3px;background:#fdf8c8;"></div>
<div style="position:absolute;left:140px;top:1015.3000000000001px;width:1627px;height:1.3px;background:#fdf8c8;"></div>
<div style="position:absolute;left:140px;top:1043.4px;width:1627px;height:1.3px;background:#fdf8c8;"></div>
<div style="position:absolute;left:140px;top:1071.4px;width:1627px;height:1.3px;background:#fdf8c8;"></div>
<div style="position:absolute;left:140px;top:1099.5px;width:1627px;height:1.3px;background:#fdf8c8;"></div>
<div style="position:absolute;left:140px;top:1127.5px;width:1627px;height:1.3px;background:#fdf8c8;"></div>
<div style="position:absolute;left:140px;top:1155.6000000000001px;width:1627px;height:1.3px;background:#fdf8c8;"></div>
<div style="position:absolute;left:140px;top:1183.6000000000001px;width:1627px;height:1.3px;background:#fdf8c8;"></div>
<div style="position:absolute;left:944.0px;top:653px;width:3px;height:559px;background:#ffffff;"></div>
<div style="position:absolute;left:1147.5px;top:653px;width:3px;height:559px;background:#ffffff;"></div>
<div style="position:absolute;left:1351.5px;top:653px;width:3px;height:559px;background:#ffffff;"></div>
<div style="position:absolute;left:1558.5px;top:653px;width:3px;height:559px;background:#ffffff;"></div>
<div style="position:absolute;left:140.50px;top:655.05px;font-family:'Liberation Sans', sans-serif;font-size:21.7px;line-height:1;font-weight:normal;color:#222222;white-space:pre;letter-spacing:0.088px;">Initial E-commerce Platform Setup &amp; Customization</div>
<div style="position:absolute;left:1014.36px;top:655.05px;font-family:'Liberation Sans', sans-serif;font-size:21.7px;line-height:1;font-weight:normal;color:#222222;white-space:pre;">Jan-26</div>
<div style="position:absolute;left:1216.22px;top:655.05px;font-family:'Liberation Sans', sans-serif;font-size:21.7px;line-height:1;font-weight:normal;color:#222222;white-space:pre;">Mar-26</div>
<div style="position:absolute;left:1482.90px;top:655.05px;font-family:'Liberation Sans', sans-serif;font-size:21.7px;line-height:1;font-weight:normal;color:#222222;white-space:pre;">15,000</div>
<div style="position:absolute;left:1645.97px;top:655.05px;font-family:'Liberation Sans', sans-serif;font-size:21.7px;line-height:1;font-weight:normal;color:#222222;white-space:pre;">Yes</div>
<div style="position:absolute;left:1870.97px;top:655.55px;font-family:'Liberation Sans', sans-serif;font-size:21.7px;line-height:1;font-weight:normal;color:#222222;white-space:pre;">5,000</div>
<div style="position:absolute;left:2039.97px;top:655.55px;font-family:'Liberation Sans', sans-serif;font-size:21.7px;line-height:1;font-weight:normal;color:#222222;white-space:pre;">5,000</div>
<div style="position:absolute;left:2208.97px;top:655.55px;font-family:'Liberation Sans', sans-serif;font-size:21.7px;line-height:1;font-weight:normal;color:#222222;white-space:pre;">5,000</div>
<div style="position:absolute;left:2401px;top:666.0px;width:6px;height:2px;background:#222222;"></div>
<div style="position:absolute;left:2570px;top:666.0px;width:6px;height:2px;background:#222222;"></div>
<div style="position:absolute;left:2739px;top:666.0px;width:6px;height:2px;background:#222222;"></div>
<div style="position:absolute;left:140.50px;top:683.05px;font-family:'Liberation Sans', sans-serif;font-size:21.7px;line-height:1;font-weight:normal;color:#222222;white-space:pre;letter-spacing:0.121px;">Initial Product Photography &amp; Content Creation</div>
<div style="position:absolute;left:1012.46px;top:683.05px;font-family:'Liberation Sans', sans-serif;font-size:21.7px;line-height:1;font-weight:normal;color:#222222;white-space:pre;">Feb-26</div>
<div style="position:absolute;left:1218.87px;top:683.05px;font-family:'Liberation Sans', sans-serif;font-size:21.7px;line-height:1;font-weight:normal;color:#222222;white-space:pre;">Apr-26</div>
<div style="position:absolute;left:1494.97px;top:683.05px;font-family:'Liberation Sans', sans-serif;font-size:21.7px;line-height:1;font-weight:normal;color:#222222;white-space:pre;">8,000</div>
<div style="position:absolute;left:1645.97px;top:683.05px;font-family:'Liberation Sans', sans-serif;font-size:21.7px;line-height:1;font-weight:normal;color:#222222;white-space:pre;">Yes</div>
<div style="position:absolute;left:1894px;top:694.0px;width:6px;height:2px;background:#222222;"></div>
<div style="position:absolute;left:2040.27px;top:683.55px;font-family:'Liberation Sans', sans-serif;font-size:21.7px;line-height:1;font-weight:normal;color:#222222;white-space:pre;">2,667</div>
<div style="position:absolute;left:2209.27px;top:683.55px;font-family:'Liberation Sans', sans-serif;font-size:21.7px;line-height:1;font-weight:normal;color:#222222;white-space:pre;">2,667</div>
<div style="position:absolute;left:2378.27px;top:683.55px;font-family:'Liberation Sans', sans-serif;font-size:21.7px;line-height:1;font-weight:normal;color:#222222;white-space:pre;">2,667</div>
<div style="position:absolute;left:2570px;top:694.0px;width:6px;height:2px;background:#222222;"></div>
<div style="position:absolute;left:2739px;top:694.0px;width:6px;height:2px;background:#222222;"></div>
<div style="position:absolute;left:141.50px;top:711.15px;font-family:'Liberation Sans', sans-serif;font-size:21.7px;line-height:1;font-weight:normal;color:#222222;white-space:pre;letter-spacing:0.131px;">Office Equipment (Laptops, Monitors)</div>
<div style="position:absolute;left:1014.36px;top:711.15px;font-family:'Liberation Sans', sans-serif;font-size:21.7px;line-height:1;font-weight:normal;color:#222222;white-space:pre;">Jan-26</div>
<div style="position:absolute;left:1216.21px;top:711.15px;font-family:'Liberation Sans', sans-serif;font-size:21.7px;line-height:1;font-weight:normal;color:#222222;white-space:pre;">Feb-26</div>
<div style="position:absolute;left:1494.97px;top:711.15px;font-family:'Liberation Sans', sans-serif;font-size:21.7px;line-height:1;font-weight:normal;color:#222222;white-space:pre;">5,000</div>
<div style="position:absolute;left:1645.97px;top:711.15px;font-family:'Liberation Sans', sans-serif;font-size:21.7px;line-height:1;font-weight:normal;color:#222222;white-space:pre;">Yes</div>
<div style="position:absolute;left:1870.97px;top:711.65px;font-family:'Liberation Sans', sans-serif;font-size:21.7px;line-height:1;font-weight:normal;color:#222222;white-space:pre;">2,500</div>
<div style="position:absolute;left:2039.97px;top:711.65px;font-family:'Liberation Sans', sans-serif;font-size:21.7px;line-height:1;font-weight:normal;color:#222222;white-space:pre;">2,500</div>
<div style="position:absolute;left:2232px;top:722.1px;width:6px;height:2px;background:#222222;"></div>
<div style="position:absolute;left:2401px;top:722.1px;width:6px;height:2px;background:#222222;"></div>
<div style="position:absolute;left:2570px;top:722.1px;width:6px;height:2px;background:#222222;"></div>
<div style="position:absolute;left:2739px;top:722.1px;width:6px;height:2px;background:#222222;"></div>
<div style="position:absolute;left:142.50px;top:739.15px;font-family:'Liberation Sans', sans-serif;font-size:21.7px;line-height:1;font-weight:normal;color:#222222;white-space:pre;letter-spacing:0.211px;">Warehouse/Fulfillment Integration Software</div>
<div style="position:absolute;left:1015.12px;top:739.15px;font-family:'Liberation Sans', sans-serif;font-size:21.7px;line-height:1;font-weight:normal;color:#222222;white-space:pre;">Apr-26</div>
<div style="position:absolute;left:1218.11px;top:739.15px;font-family:'Liberation Sans', sans-serif;font-size:21.7px;line-height:1;font-weight:normal;color:#222222;white-space:pre;">Jun-26</div>
<div style="position:absolute;left:1494.97px;top:739.15px;font-family:'Liberation Sans', sans-serif;font-size:21.7px;line-height:1;font-weight:normal;color:#222222;white-space:pre;">7,000</div>
<div style="position:absolute;left:1645.97px;top:739.15px;font-family:'Liberation Sans', sans-serif;font-size:21.7px;line-height:1;font-weight:normal;color:#222222;white-space:pre;">Yes</div>
<div style="position:absolute;left:1894px;top:750.1px;width:6px;height:2px;background:#222222;"></div>
<div style="position:absolute;left:2063px;top:750.1px;width:6px;height:2px;background:#222222;"></div>
<div style="position:absolute;left:2232px;top:750.1px;width:6px;height:2px;background:#222222;"></div>
<div style="position:absolute;left:2378.07px;top:739.65px;font-family:'Liberation Sans', sans-serif;font-size:21.7px;line-height:1;font-weight:normal;color:#222222;white-space:pre;">2,333</div>
<div style="position:absolute;left:2547.07px;top:739.65px;font-family:'Liberation Sans', sans-serif;font-size:21.7px;line-height:1;font-weight:normal;color:#222222;white-space:pre;">2,333</div>
<div style="position:absolute;left:2716.07px;top:739.65px;font-family:'Liberation Sans', sans-serif;font-size:21.7px;line-height:1;font-weight:normal;color:#222222;white-space:pre;">2,333</div>
<div style="position:absolute;left:140.50px;top:767.25px;font-family:'Liberation Sans', sans-serif;font-size:21.7px;line-height:1;font-weight:normal;color:#222222;white-space:pre;letter-spacing:0.161px;">Initial Inventory Purchase (Seed Stock)</div>
<div style="position:absolute;left:1012.47px;top:767.25px;font-family:'Liberation Sans', sans-serif;font-size:21.7px;line-height:1;font-weight:normal;color:#222222;white-space:pre;">Mar-26</div>
<div style="position:absolute;left:1214.41px;top:767.25px;font-family:'Liberation Sans', sans-serif;font-size:21.7px;line-height:1;font-weight:normal;color:#222222;white-space:pre;">May-26</div>
<div style="position:absolute;left:1482.90px;top:767.25px;font-family:'Liberation Sans', sans-serif;font-size:21.7px;line-height:1;font-weight:normal;color:#222222;white-space:pre;">20,000</div>
<div style="position:absolute;left:1645.97px;top:767.25px;font-family:'Liberation Sans', sans-serif;font-size:21.7px;line-height:1;font-weight:normal;color:#222222;white-space:pre;">Yes</div>
<div style="position:absolute;left:1894px;top:778.2px;width:6px;height:2px;background:#222222;"></div>
<div style="position:absolute;left:2063px;top:778.2px;width:6px;height:2px;background:#222222;"></div>
<div style="position:absolute;left:2209.27px;top:767.75px;font-family:'Liberation Sans', sans-serif;font-size:21.7px;line-height:1;font-weight:normal;color:#222222;white-space:pre;">6,667</div>
<div style="position:absolute;left:2378.27px;top:767.75px;font-family:'Liberation Sans', sans-serif;font-size:21.7px;line-height:1;font-weight:normal;color:#222222;white-space:pre;">6,667</div>
<div style="position:absolute;left:2547.27px;top:767.75px;font-family:'Liberation Sans', sans-serif;font-size:21.7px;line-height:1;font-weight:normal;color:#222222;white-space:pre;">6,667</div>
<div style="position:absolute;left:2739px;top:778.2px;width:6px;height:2px;background:#222222;"></div>
<div style="position:absolute;left:140.80px;top:795.25px;font-family:'Liberation Sans', sans-serif;font-size:21.7px;line-height:1;font-weight:normal;color:#222222;white-space:pre;letter-spacing:0.107px;">Brand Partnership Onboarding Tools</div>
<div style="position:absolute;left:1010.66px;top:795.25px;font-family:'Liberation Sans', sans-serif;font-size:21.7px;line-height:1;font-weight:normal;color:#222222;white-space:pre;">May-26</div>
<div style="position:absolute;left:1221.73px;top:795.25px;font-family:'Liberation Sans', sans-serif;font-size:21.7px;line-height:1;font-weight:normal;color:#222222;white-space:pre;">Jul-26</div>
<div style="position:absolute;left:1494.97px;top:795.25px;font-family:'Liberation Sans', sans-serif;font-size:21.7px;line-height:1;font-weight:normal;color:#222222;white-space:pre;">3,000</div>
<div style="position:absolute;left:1645.97px;top:795.25px;font-family:'Liberation Sans', sans-serif;font-size:21.7px;line-height:1;font-weight:normal;color:#222222;white-space:pre;">Yes</div>
<div style="position:absolute;left:1894px;top:806.2px;width:6px;height:2px;background:#222222;"></div>
<div style="position:absolute;left:2063px;top:806.2px;width:6px;height:2px;background:#222222;"></div>
<div style="position:absolute;left:2232px;top:806.2px;width:6px;height:2px;background:#222222;"></div>
<div style="position:absolute;left:2401px;top:806.2px;width:6px;height:2px;background:#222222;"></div>
<div style="position:absolute;left:2546.97px;top:795.75px;font-family:'Liberation Sans', sans-serif;font-size:21.7px;line-height:1;font-weight:normal;color:#222222;white-space:pre;">1,000</div>
<div style="position:absolute;left:2715.97px;top:795.75px;font-family:'Liberation Sans', sans-serif;font-size:21.7px;line-height:1;font-weight:normal;color:#222222;white-space:pre;">1,000</div>
<div style="position:absolute;left:140.80px;top:823.35px;font-family:'Liberation Sans', sans-serif;font-size:21.7px;line-height:1;font-weight:normal;color:#222222;white-space:pre;letter-spacing:0.173px;">Legal Entity Setup &amp; Initial IP Protection</div>
<div style="position:absolute;left:1014.36px;top:823.35px;font-family:'Liberation Sans', sans-serif;font-size:21.7px;line-height:1;font-weight:normal;color:#222222;white-space:pre;">Jan-26</div>
<div style="position:absolute;left:1216.22px;top:823.35px;font-family:'Liberation Sans', sans-serif;font-size:21.7px;line-height:1;font-weight:normal;color:#222222;white-space:pre;">Mar-26</div>
<div style="position:absolute;left:1494.97px;top:823.35px;font-family:'Liberation Sans', sans-serif;font-size:21.7px;line-height:1;font-weight:normal;color:#222222;white-space:pre;">4,000</div>
<div style="position:absolute;left:1645.97px;top:823.35px;font-family:'Liberation Sans', sans-serif;font-size:21.7px;line-height:1;font-weight:normal;color:#222222;white-space:pre;">Yes</div>
<div style="position:absolute;left:1871.07px;top:823.85px;font-family:'Liberation Sans', sans-serif;font-size:21.7px;line-height:1;font-weight:normal;color:#222222;white-space:pre;">1,333</div>
<div style="position:absolute;left:2040.07px;top:823.85px;font-family:'Liberation Sans', sans-serif;font-size:21.7px;line-height:1;font-weight:normal;color:#222222;white-space:pre;">1,333</div>
<div style="position:absolute;left:2209.07px;top:823.85px;font-family:'Liberation Sans', sans-serif;font-size:21.7px;line-height:1;font-weight:normal;color:#222222;white-space:pre;">1,333</div>
<div style="position:absolute;left:2401px;top:834.3px;width:6px;height:2px;background:#222222;"></div>
<div style="position:absolute;left:2570px;top:834.3px;width:6px;height:2px;background:#222222;"></div>
<div style="position:absolute;left:2739px;top:834.3px;width:6px;height:2px;background:#222222;"></div>
<div style="position:absolute;left:143.4px;top:862.1999999999999px;width:5.6px;height:2.2px;background:#111;"></div>
<div style="position:absolute;left:1645.97px;top:851.35px;font-family:'Liberation Sans', sans-serif;font-size:21.7px;line-height:1;font-weight:normal;color:#222222;white-space:pre;">Yes</div>
<div style="position:absolute;left:1894px;top:862.3px;width:6px;height:2px;background:#222222;"></div>
<div style="position:absolute;left:2063px;top:862.3px;width:6px;height:2px;background:#222222;"></div>
<div style="position:absolute;left:2232px;top:862.3px;width:6px;height:2px;background:#222222;"></div>
<div style="position:absolute;left:2401px;top:862.3px;width:6px;height:2px;background:#222222;"></div>
<div style="position:absolute;left:2570px;top:862.3px;width:6px;height:2px;background:#222222;"></div>
<div style="position:absolute;left:2739px;top:862.3px;width:6px;height:2px;background:#222222;"></div>
<div style="position:absolute;left:143.4px;top:890.3px;width:5.6px;height:2.2px;background:#111;"></div>
<div style="position:absolute;left:1645.97px;top:879.45px;font-family:'Liberation Sans', sans-serif;font-size:21.7px;line-height:1;font-weight:normal;color:#222222;white-space:pre;">Yes</div>
<div style="position:absolute;left:1894px;top:890.4px;width:6px;height:2px;background:#222222;"></div>
<div style="position:absolute;left:2063px;top:890.4px;width:6px;height:2px;background:#222222;"></div>
<div style="position:absolute;left:2232px;top:890.4px;width:6px;height:2px;background:#222222;"></div>
<div style="position:absolute;left:2401px;top:890.4px;width:6px;height:2px;background:#222222;"></div>
<div style="position:absolute;left:2570px;top:890.4px;width:6px;height:2px;background:#222222;"></div>
<div style="position:absolute;left:2739px;top:890.4px;width:6px;height:2px;background:#222222;"></div>
<div style="position:absolute;left:143.4px;top:918.3px;width:5.6px;height:2.2px;background:#111;"></div>
<div style="position:absolute;left:1645.97px;top:907.45px;font-family:'Liberation Sans', sans-serif;font-size:21.7px;line-height:1;font-weight:normal;color:#222222;white-space:pre;">Yes</div>
<div style="position:absolute;left:1894px;top:918.4px;width:6px;height:2px;background:#222222;"></div>
<div style="position:absolute;left:2063px;top:918.4px;width:6px;height:2px;background:#222222;"></div>
<div style="position:absolute;left:2232px;top:918.4px;width:6px;height:2px;background:#222222;"></div>
<div style="position:absolute;left:2401px;top:918.4px;width:6px;height:2px;background:#222222;"></div>
<div style="position:absolute;left:2570px;top:918.4px;width:6px;height:2px;background:#222222;"></div>
<div style="position:absolute;left:2739px;top:918.4px;width:6px;height:2px;background:#222222;"></div>
<div style="position:absolute;left:143.4px;top:946.4px;width:5.6px;height:2.2px;background:#111;"></div>
<div style="position:absolute;left:1645.97px;top:935.55px;font-family:'Liberation Sans', sans-serif;font-size:21.7px;line-height:1;font-weight:normal;color:#222222;white-space:pre;">Yes</div>
<div style="position:absolute;left:1894px;top:946.5px;width:6px;height:2px;background:#222222;"></div>
<div style="position:absolute;left:2063px;top:946.5px;width:6px;height:2px;background:#222222;"></div>
<div style="position:absolute;left:2232px;top:946.5px;width:6px;height:2px;background:#222222;"></div>
<div style="position:absolute;left:2401px;top:946.5px;width:6px;height:2px;background:#222222;"></div>
<div style="position:absolute;left:2570px;top:946.5px;width:6px;height:2px;background:#222222;"></div>
<div style="position:absolute;left:2739px;top:946.5px;width:6px;height:2px;background:#222222;"></div>
<div style="position:absolute;left:143.4px;top:974.4px;width:5.6px;height:2.2px;background:#111;"></div>
<div style="position:absolute;left:1645.97px;top:963.55px;font-family:'Liberation Sans', sans-serif;font-size:21.7px;line-height:1;font-weight:normal;color:#222222;white-space:pre;">Yes</div>
<div style="position:absolute;left:1894px;top:974.5px;width:6px;height:2px;background:#222222;"></div>
<div style="position:absolute;left:2063px;top:974.5px;width:6px;height:2px;background:#222222;"></div>
<div style="position:absolute;left:2232px;top:974.5px;width:6px;height:2px;background:#222222;"></div>
<div style="position:absolute;left:2401px;top:974.5px;width:6px;height:2px;background:#222222;"></div>
<div style="position:absolute;left:2570px;top:974.5px;width:6px;height:2px;background:#222222;"></div>
<div style="position:absolute;left:2739px;top:974.5px;width:6px;height:2px;background:#222222;"></div>
<div style="position:absolute;left:143.4px;top:1002.5px;width:5.6px;height:2.2px;background:#111;"></div>
<div style="position:absolute;left:1645.97px;top:991.65px;font-family:'Liberation Sans', sans-serif;font-size:21.7px;line-height:1;font-weight:normal;color:#222222;white-space:pre;">Yes</div>
<div style="position:absolute;left:1894px;top:1002.6px;width:6px;height:2px;background:#222222;"></div>
<div style="position:absolute;left:2063px;top:1002.6px;width:6px;height:2px;background:#222222;"></div>
<div style="position:absolute;left:2232px;top:1002.6px;width:6px;height:2px;background:#222222;"></div>
<div style="position:absolute;left:2401px;top:1002.6px;width:6px;height:2px;background:#222222;"></div>
<div style="position:absolute;left:2570px;top:1002.6px;width:6px;height:2px;background:#222222;"></div>
<div style="position:absolute;left:2739px;top:1002.6px;width:6px;height:2px;background:#222222;"></div>
<div style="position:absolute;left:143.4px;top:1030.5px;width:5.6px;height:2.2px;background:#111;"></div>
<div style="position:absolute;left:1645.97px;top:1019.65px;font-family:'Liberation Sans', sans-serif;font-size:21.7px;line-height:1;font-weight:normal;color:#222222;white-space:pre;">Yes</div>
<div style="position:absolute;left:1894px;top:1030.6px;width:6px;height:2px;background:#222222;"></div>
<div style="position:absolute;left:2063px;top:1030.6px;width:6px;height:2px;background:#222222;"></div>
<div style="position:absolute;left:2232px;top:1030.6px;width:6px;height:2px;background:#222222;"></div>
<div style="position:absolute;left:2401px;top:1030.6px;width:6px;height:2px;background:#222222;"></div>
<div style="position:absolute;left:2570px;top:1030.6px;width:6px;height:2px;background:#222222;"></div>
<div style="position:absolute;left:2739px;top:1030.6px;width:6px;height:2px;background:#222222;"></div>
<div style="position:absolute;left:143.4px;top:1058.6000000000001px;width:5.6px;height:2.2px;background:#111;"></div>
<div style="position:absolute;left:1645.97px;top:1047.76px;font-family:'Liberation Sans', sans-serif;font-size:21.7px;line-height:1;font-weight:normal;color:#222222;white-space:pre;">Yes</div>
<div style="position:absolute;left:1894px;top:1058.7px;width:6px;height:2px;background:#222222;"></div>
<div style="position:absolute;left:2063px;top:1058.7px;width:6px;height:2px;background:#222222;"></div>
<div style="position:absolute;left:2232px;top:1058.7px;width:6px;height:2px;background:#222222;"></div>
<div style="position:absolute;left:2401px;top:1058.7px;width:6px;height:2px;background:#222222;"></div>
<div style="position:absolute;left:2570px;top:1058.7px;width:6px;height:2px;background:#222222;"></div>
<div style="position:absolute;left:2739px;top:1058.7px;width:6px;height:2px;background:#222222;"></div>
<div style="position:absolute;left:143.4px;top:1086.6000000000001px;width:5.6px;height:2.2px;background:#111;"></div>
<div style="position:absolute;left:1645.97px;top:1075.76px;font-family:'Liberation Sans', sans-serif;font-size:21.7px;line-height:1;font-weight:normal;color:#222222;white-space:pre;">Yes</div>
<div style="position:absolute;left:1894px;top:1086.7px;width:6px;height:2px;background:#222222;"></div>
<div style="position:absolute;left:2063px;top:1086.7px;width:6px;height:2px;background:#222222;"></div>
<div style="position:absolute;left:2232px;top:1086.7px;width:6px;height:2px;background:#222222;"></div>
<div style="position:absolute;left:2401px;top:1086.7px;width:6px;height:2px;background:#222222;"></div>
<div style="position:absolute;left:2570px;top:1086.7px;width:6px;height:2px;background:#222222;"></div>
<div style="position:absolute;left:2739px;top:1086.7px;width:6px;height:2px;background:#222222;"></div>
<div style="position:absolute;left:143.4px;top:1114.7px;width:5.6px;height:2.2px;background:#111;"></div>
<div style="position:absolute;left:1645.97px;top:1103.86px;font-family:'Liberation Sans', sans-serif;font-size:21.7px;line-height:1;font-weight:normal;color:#222222;white-space:pre;">Yes</div>
<div style="position:absolute;left:1894px;top:1114.8px;width:6px;height:2px;background:#222222;"></div>
<div style="position:absolute;left:2063px;top:1114.8px;width:6px;height:2px;background:#222222;"></div>
<div style="position:absolute;left:2232px;top:1114.8px;width:6px;height:2px;background:#222222;"></div>
<div style="position:absolute;left:2401px;top:1114.8px;width:6px;height:2px;background:#222222;"></div>
<div style="position:absolute;left:2570px;top:1114.8px;width:6px;height:2px;background:#222222;"></div>
<div style="position:absolute;left:2739px;top:1114.8px;width:6px;height:2px;background:#222222;"></div>
<div style="position:absolute;left:143.4px;top:1142.7px;width:5.6px;height:2.2px;background:#111;"></div>
<div style="position:absolute;left:1645.97px;top:1131.86px;font-family:'Liberation Sans', sans-serif;font-size:21.7px;line-height:1;font-weight:normal;color:#222222;white-space:pre;">Yes</div>
<div style="position:absolute;left:1894px;top:1142.8px;width:6px;height:2px;background:#222222;"></div>
<div style="position:absolute;left:2063px;top:1142.8px;width:6px;height:2px;background:#222222;"></div>
<div style="position:absolute;left:2232px;top:1142.8px;width:6px;height:2px;background:#222222;"></div>
<div style="position:absolute;left:2401px;top:1142.8px;width:6px;height:2px;background:#222222;"></div>
<div style="position:absolute;left:2570px;top:1142.8px;width:6px;height:2px;background:#222222;"></div>
<div style="position:absolute;left:2739px;top:1142.8px;width:6px;height:2px;background:#222222;"></div>
<div style="position:absolute;left:143.4px;top:1170.8000000000002px;width:5.6px;height:2.2px;background:#111;"></div>
<div style="position:absolute;left:1645.97px;top:1159.96px;font-family:'Liberation Sans', sans-serif;font-size:21.7px;line-height:1;font-weight:normal;color:#222222;white-space:pre;">Yes</div>
<div style="position:absolute;left:1894px;top:1170.9px;width:6px;height:2px;background:#222222;"></div>
<div style="position:absolute;left:2063px;top:1170.9px;width:6px;height:2px;background:#222222;"></div>
<div style="position:absolute;left:2232px;top:1170.9px;width:6px;height:2px;background:#222222;"></div>
<div style="position:absolute;left:2401px;top:1170.9px;width:6px;height:2px;background:#222222;"></div>
<div style="position:absolute;left:2570px;top:1170.9px;width:6px;height:2px;background:#222222;"></div>
<div style="position:absolute;left:2739px;top:1170.9px;width:6px;height:2px;background:#222222;"></div>
<div style="position:absolute;left:143.4px;top:1198.8000000000002px;width:5.6px;height:2.2px;background:#111;"></div>
<div style="position:absolute;left:1645.97px;top:1187.96px;font-family:'Liberation Sans', sans-serif;font-size:21.7px;line-height:1;font-weight:normal;color:#222222;white-space:pre;">Yes</div>
<div style="position:absolute;left:1894px;top:1198.9px;width:6px;height:2px;background:#222222;"></div>
<div style="position:absolute;left:2063px;top:1198.9px;width:6px;height:2px;background:#222222;"></div>
<div style="position:absolute;left:2232px;top:1198.9px;width:6px;height:2px;background:#222222;"></div>
<div style="position:absolute;left:2401px;top:1198.9px;width:6px;height:2px;background:#222222;"></div>
<div style="position:absolute;left:2570px;top:1198.9px;width:6px;height:2px;background:#222222;"></div>
<div style="position:absolute;left:2739px;top:1198.9px;width:6px;height:2px;background:#222222;"></div>
<div style="position:absolute;left:138.5px;top:1212px;width:2721.5px;height:35.7px;background:#4bb2e6;"></div>
<div style="position:absolute;left:144.50px;top:1215.62px;font-family:'Liberation Sans', sans-serif;font-size:27.5px;line-height:1;font-weight:bold;color:#fff;white-space:pre;letter-spacing:1.944px;-webkit-text-stroke-width:0.6px;">Total</div>
<div style="position:absolute;left:1469.10px;top:1218.88px;font-family:'Liberation Sans', sans-serif;font-size:22.5px;line-height:1;font-weight:bold;color:#fff;white-space:pre;letter-spacing:1.600px;-webkit-text-stroke-width:0.45px;">62,000</div>
<div style="position:absolute;left:1859.11px;top:1218.88px;font-family:'Liberation Sans', sans-serif;font-size:22.5px;line-height:1;font-weight:bold;color:#fff;white-space:pre;letter-spacing:1.600px;-webkit-text-stroke-width:0.45px;">8,833</div>
<div style="position:absolute;left:2015.34px;top:1218.88px;font-family:'Liberation Sans', sans-serif;font-size:22.5px;line-height:1;font-weight:bold;color:#fff;white-space:pre;letter-spacing:1.600px;-webkit-text-stroke-width:0.45px;">11,500</div>
<div style="position:absolute;left:2183.10px;top:1218.88px;font-family:'Liberation Sans', sans-serif;font-size:22.5px;line-height:1;font-weight:bold;color:#fff;white-space:pre;letter-spacing:1.600px;-webkit-text-stroke-width:0.45px;">15,667</div>
<div style="position:absolute;left:2353.34px;top:1218.88px;font-family:'Liberation Sans', sans-serif;font-size:22.5px;line-height:1;font-weight:bold;color:#fff;white-space:pre;letter-spacing:1.600px;-webkit-text-stroke-width:0.45px;">11,667</div>
<div style="position:absolute;left:2521.10px;top:1218.88px;font-family:'Liberation Sans', sans-serif;font-size:22.5px;line-height:1;font-weight:bold;color:#fff;white-space:pre;letter-spacing:1.600px;-webkit-text-stroke-width:0.45px;">10,000</div>
<div style="position:absolute;left:2704.11px;top:1218.88px;font-family:'Liberation Sans', sans-serif;font-size:22.5px;line-height:1;font-weight:bold;color:#fff;white-space:pre;letter-spacing:1.600px;-webkit-text-stroke-width:0.45px;">3,333</div>
<div style="position:absolute;left:95.78px;top:1306.60px;font-family:'Liberation Sans', sans-serif;font-size:40px;line-height:1;font-weight:bold;color:#222222;white-space:pre;letter-spacing:0.446px;-webkit-text-stroke:1.1px #222;">Startup Costs Depreciation, $</div>
<div style="position:absolute;left:138.5px;top:1373px;width:2721.5px;height:28px;background:#4bb2e6;"></div>
<div style="position:absolute;left:138.5px;top:1457.5px;width:2721.5px;height:28.5px;background:#4bb2e6;"></div>
<div style="position:absolute;left:138.5px;top:1528px;width:2721.5px;height:28px;background:#4bb2e6;"></div>
<div style="position:absolute;left:138.5px;top:1584px;width:2721.5px;height:28px;background:#4bb2e6;"></div>
<div style="position:absolute;left:1561px;top:1399.8px;width:206px;height:1.2px;background:#ffffff;"></div>
<div style="position:absolute;left:1561px;top:1554.8px;width:206px;height:1.2px;background:#ffffff;"></div>
<div style="position:absolute;left:142.70px;top:1376.88px;font-family:'Liberation Sans', sans-serif;font-size:22.5px;line-height:1;font-weight:bold;color:#fff;white-space:pre;letter-spacing:0.349px;-webkit-text-stroke-width:0.45px;">Opening Net Book Value</div>
<div style="position:absolute;left:1885.8px;top:1387px;width:8.4px;height:3px;background:#fff;"></div>
<div style="position:absolute;left:2028.21px;top:1376.88px;font-family:'Liberation Sans', sans-serif;font-size:22.5px;line-height:1;font-weight:bold;color:#fff;white-space:pre;letter-spacing:1.600px;-webkit-text-stroke-width:0.45px;">8,760</div>
<div style="position:absolute;left:2183.10px;top:1376.88px;font-family:'Liberation Sans', sans-serif;font-size:22.5px;line-height:1;font-weight:bold;color:#fff;white-space:pre;letter-spacing:1.600px;-webkit-text-stroke-width:0.45px;">20,090</div>
<div style="position:absolute;left:2352.10px;top:1376.88px;font-family:'Liberation Sans', sans-serif;font-size:22.5px;line-height:1;font-weight:bold;color:#fff;white-space:pre;letter-spacing:1.600px;-webkit-text-stroke-width:0.45px;">35,457</div>
<div style="position:absolute;left:2521.00px;top:1376.88px;font-family:'Liberation Sans', sans-serif;font-size:22.5px;line-height:1;font-weight:bold;color:#fff;white-space:pre;letter-spacing:1.600px;-webkit-text-stroke-width:0.45px;">46,726</div>
<div style="position:absolute;left:2690.00px;top:1376.88px;font-family:'Liberation Sans', sans-serif;font-size:22.5px;line-height:1;font-weight:bold;color:#fff;white-space:pre;letter-spacing:1.600px;-webkit-text-stroke-width:0.45px;">56,246</div>
<div style="position:absolute;left:162.10px;top:1404.36px;font-family:'Liberation Sans', sans-serif;font-size:21.7px;line-height:1;font-weight:normal;color:#222222;white-space:pre;letter-spacing:0.092px;">Expenditure - Amortizable</div>
<div style="position:absolute;left:1725px;top:1414.8px;width:6px;height:2px;background:#222222;"></div>
<div style="position:absolute;left:1871.07px;top:1404.36px;font-family:'Liberation Sans', sans-serif;font-size:21.7px;line-height:1;font-weight:normal;color:#222222;white-space:pre;">8,833</div>
<div style="position:absolute;left:2029.51px;top:1404.36px;font-family:'Liberation Sans', sans-serif;font-size:21.7px;line-height:1;font-weight:normal;color:#222222;white-space:pre;">11,500</div>
<div style="position:absolute;left:2197.20px;top:1404.36px;font-family:'Liberation Sans', sans-serif;font-size:21.7px;line-height:1;font-weight:normal;color:#222222;white-space:pre;">15,667</div>
<div style="position:absolute;left:2367.81px;top:1404.36px;font-family:'Liberation Sans', sans-serif;font-size:21.7px;line-height:1;font-weight:normal;color:#222222;white-space:pre;">11,667</div>
<div style="position:absolute;left:2534.90px;top:1404.36px;font-family:'Liberation Sans', sans-serif;font-size:21.7px;line-height:1;font-weight:normal;color:#222222;white-space:pre;">10,000</div>
<div style="position:absolute;left:2716.07px;top:1404.36px;font-family:'Liberation Sans', sans-serif;font-size:21.7px;line-height:1;font-weight:normal;color:#222222;white-space:pre;">3,333</div>
<div style="position:absolute;left:162.10px;top:1432.86px;font-family:'Liberation Sans', sans-serif;font-size:21.7px;line-height:1;font-weight:normal;color:#222222;white-space:pre;letter-spacing:0.192px;">Depreciation (Depreciation Period (Years) - 10)</div>
<div style="position:absolute;left:1900.93px;top:1432.86px;font-family:'Liberation Sans', sans-serif;font-size:21.7px;line-height:1;font-weight:normal;color:#222222;white-space:pre;">74</div>
<div style="position:absolute;left:2058.26px;top:1432.86px;font-family:'Liberation Sans', sans-serif;font-size:21.7px;line-height:1;font-weight:normal;color:#222222;white-space:pre;">169</div>
<div style="position:absolute;left:2227.06px;top:1432.86px;font-family:'Liberation Sans', sans-serif;font-size:21.7px;line-height:1;font-weight:normal;color:#222222;white-space:pre;">300</div>
<div style="position:absolute;left:2396.36px;top:1432.86px;font-family:'Liberation Sans', sans-serif;font-size:21.7px;line-height:1;font-weight:normal;color:#222222;white-space:pre;">397</div>
<div style="position:absolute;left:2565.26px;top:1432.86px;font-family:'Liberation Sans', sans-serif;font-size:21.7px;line-height:1;font-weight:normal;color:#222222;white-space:pre;">481</div>
<div style="position:absolute;left:2734.16px;top:1432.86px;font-family:'Liberation Sans', sans-serif;font-size:21.7px;line-height:1;font-weight:normal;color:#222222;white-space:pre;">508</div>
<div style="position:absolute;left:142.70px;top:1461.38px;font-family:'Liberation Sans', sans-serif;font-size:22.5px;line-height:1;font-weight:bold;color:#fff;white-space:pre;letter-spacing:0.227px;-webkit-text-stroke-width:0.45px;">Closing Net Book Value</div>
<div style="position:absolute;left:1716.8px;top:1471.5px;width:8.4px;height:3px;background:#fff;"></div>
<div style="position:absolute;left:1859.21px;top:1461.38px;font-family:'Liberation Sans', sans-serif;font-size:22.5px;line-height:1;font-weight:bold;color:#fff;white-space:pre;letter-spacing:1.600px;-webkit-text-stroke-width:0.45px;">8,760</div>
<div style="position:absolute;left:2014.10px;top:1461.38px;font-family:'Liberation Sans', sans-serif;font-size:22.5px;line-height:1;font-weight:bold;color:#fff;white-space:pre;letter-spacing:1.600px;-webkit-text-stroke-width:0.45px;">20,090</div>
<div style="position:absolute;left:2183.10px;top:1461.38px;font-family:'Liberation Sans', sans-serif;font-size:22.5px;line-height:1;font-weight:bold;color:#fff;white-space:pre;letter-spacing:1.600px;-webkit-text-stroke-width:0.45px;">35,457</div>
<div style="position:absolute;left:2352.00px;top:1461.38px;font-family:'Liberation Sans', sans-serif;font-size:22.5px;line-height:1;font-weight:bold;color:#fff;white-space:pre;letter-spacing:1.600px;-webkit-text-stroke-width:0.45px;">46,726</div>
<div style="position:absolute;left:2521.00px;top:1461.38px;font-family:'Liberation Sans', sans-serif;font-size:22.5px;line-height:1;font-weight:bold;color:#fff;white-space:pre;letter-spacing:1.600px;-webkit-text-stroke-width:0.45px;">56,246</div>
<div style="position:absolute;left:2689.80px;top:1461.38px;font-family:'Liberation Sans', sans-serif;font-size:22.5px;line-height:1;font-weight:bold;color:#fff;white-space:pre;letter-spacing:1.600px;-webkit-text-stroke-width:0.45px;">59,071</div>
<div style="position:absolute;left:142.70px;top:1531.88px;font-family:'Liberation Sans', sans-serif;font-size:22.5px;line-height:1;font-weight:bold;color:#fff;white-space:pre;letter-spacing:0.349px;-webkit-text-stroke-width:0.45px;">Opening Net Book Value</div>
<div style="position:absolute;left:1885.8px;top:1542px;width:8.4px;height:3px;background:#fff;"></div>
<div style="position:absolute;left:2054.8px;top:1542px;width:8.4px;height:3px;background:#fff;"></div>
<div style="position:absolute;left:2223.8px;top:1542px;width:8.4px;height:3px;background:#fff;"></div>
<div style="position:absolute;left:2392.8px;top:1542px;width:8.4px;height:3px;background:#fff;"></div>
<div style="position:absolute;left:2561.8px;top:1542px;width:8.4px;height:3px;background:#fff;"></div>
<div style="position:absolute;left:2730.8px;top:1542px;width:8.4px;height:3px;background:#fff;"></div>
<div style="position:absolute;left:162.10px;top:1559.36px;font-family:'Liberation Sans', sans-serif;font-size:21.7px;line-height:1;font-weight:normal;color:#222222;white-space:pre;letter-spacing:0.099px;">Expenditure - Non-Amortizable</div>
<div style="position:absolute;left:1894px;top:1569.8px;width:6px;height:2px;background:#222222;"></div>
<div style="position:absolute;left:2063px;top:1569.8px;width:6px;height:2px;background:#222222;"></div>
<div style="position:absolute;left:2232px;top:1569.8px;width:6px;height:2px;background:#222222;"></div>
<div style="position:absolute;left:2401px;top:1569.8px;width:6px;height:2px;background:#222222;"></div>
<div style="position:absolute;left:2570px;top:1569.8px;width:6px;height:2px;background:#222222;"></div>
<div style="position:absolute;left:2739px;top:1569.8px;width:6px;height:2px;background:#222222;"></div>
<div style="position:absolute;left:142.70px;top:1587.88px;font-family:'Liberation Sans', sans-serif;font-size:22.5px;line-height:1;font-weight:bold;color:#fff;white-space:pre;letter-spacing:0.227px;-webkit-text-stroke-width:0.45px;">Closing Net Book Value</div>
<div style="position:absolute;left:1885.8px;top:1598px;width:8.4px;height:3px;background:#fff;"></div>
<div style="position:absolute;left:2054.8px;top:1598px;width:8.4px;height:3px;background:#fff;"></div>
<div style="position:absolute;left:2223.8px;top:1598px;width:8.4px;height:3px;background:#fff;"></div>
<div style="position:absolute;left:2392.8px;top:1598px;width:8.4px;height:3px;background:#fff;"></div>
<div style="position:absolute;left:2561.8px;top:1598px;width:8.4px;height:3px;background:#fff;"></div>
<div style="position:absolute;left:2730.8px;top:1598px;width:8.4px;height:3px;background:#fff;"></div>
<div style="position:absolute;left:1766.5px;top:305px;width:1.3px;height:1365px;background:#a0a0a0;"></div>
</body></html>
